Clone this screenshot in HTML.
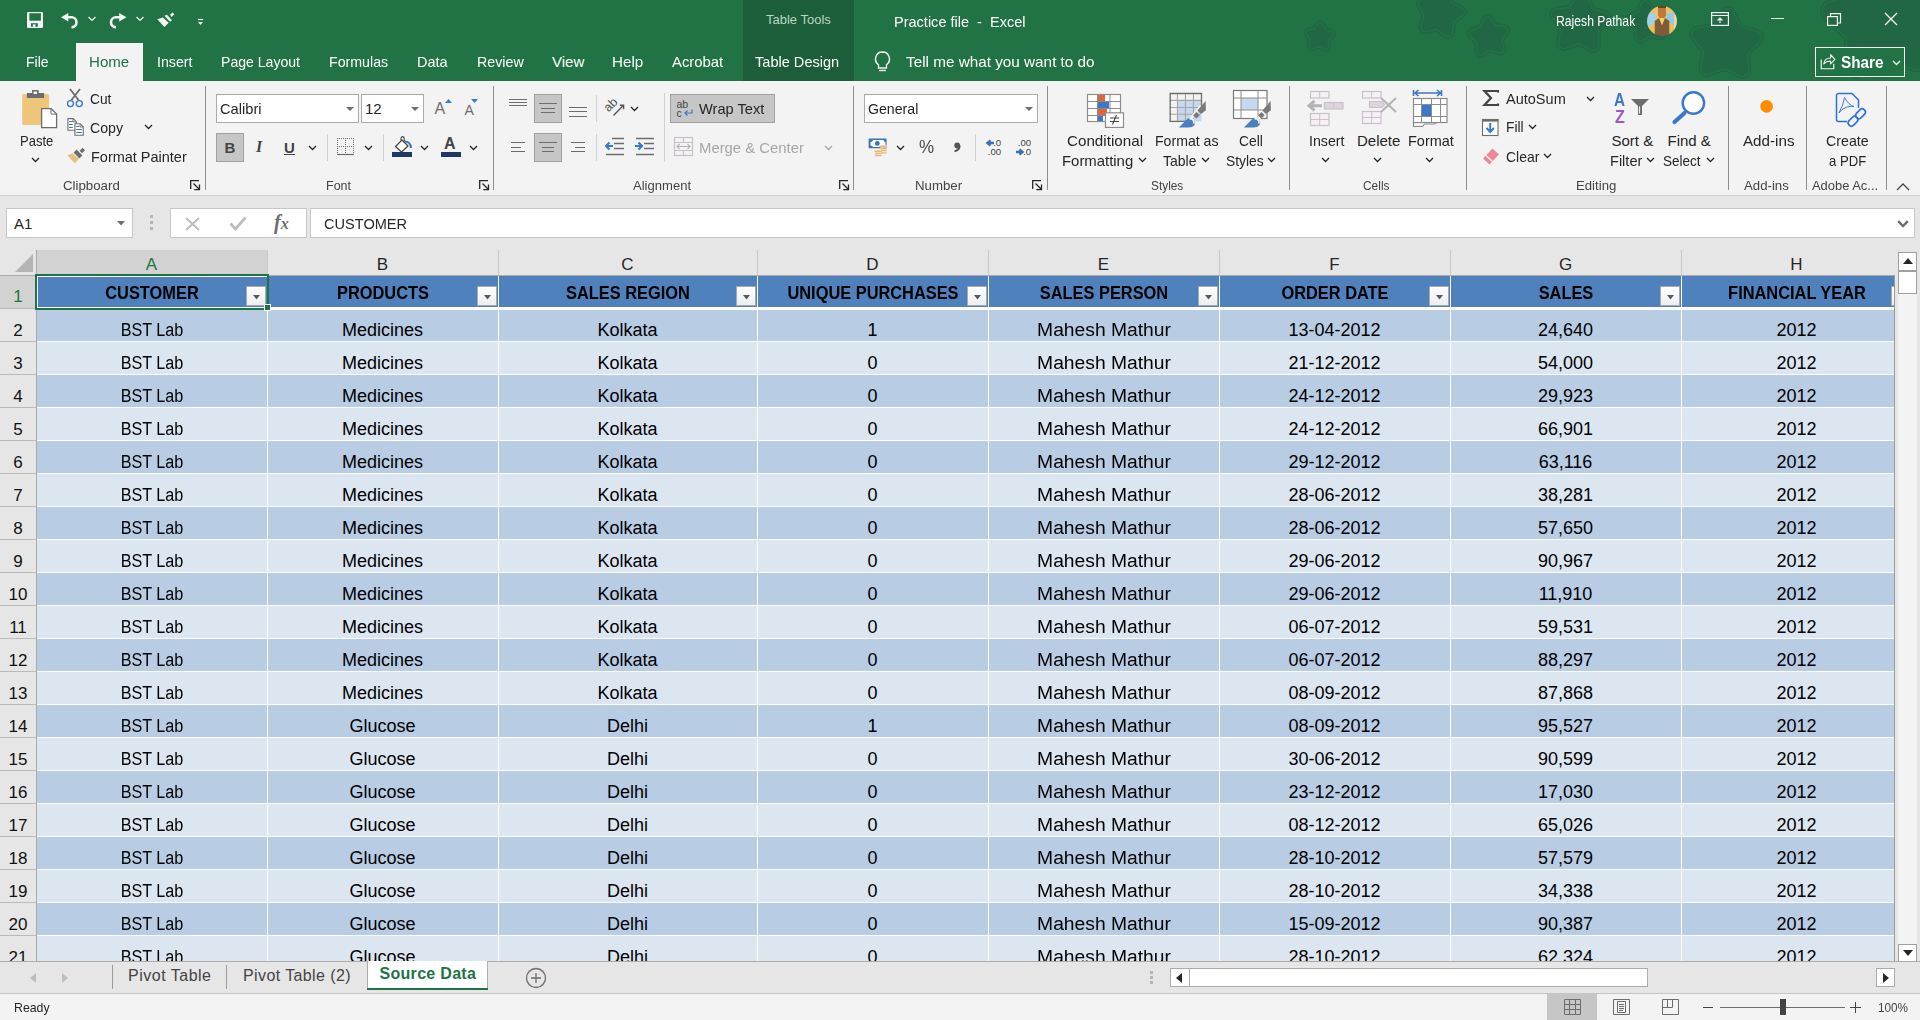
<!DOCTYPE html><html><head><meta charset="utf-8"><style>
html,body{margin:0;padding:0;width:1920px;height:1020px;overflow:hidden;background:#fff;font-family:"Liberation Sans", sans-serif;}
*{box-sizing:border-box;}
</style></head><body>
<div style="position:absolute;left:0px;top:0px;width:1920px;height:81px;background:#217346;"></div>
<svg style="position:absolute;left:0;top:0" width="1920" height="81"><path d="M1320.3,25.7 L1323.6,32.2 L1330.4,34.3 L1325.4,39.4 L1325.5,46.6 L1319.1,43.3 L1312.2,45.6 L1313.4,38.5 L1309.0,32.8 L1316.2,31.6Z" fill="#226743" stroke="#226743" stroke-width="10.5" stroke-linejoin="round"/><path d="M1320.3,25.7 L1323.6,32.2 L1330.4,34.3 L1325.4,39.4 L1325.5,46.6 L1319.1,43.3 L1312.2,45.6 L1313.4,38.5 L1309.0,32.8 L1316.2,31.6Z" fill="#217346" stroke="#217346" stroke-width="7.5" stroke-linejoin="round"/><path d="M1320.3,25.7 L1323.6,32.2 L1330.4,34.3 L1325.4,39.4 L1325.5,46.6 L1319.1,43.3 L1312.2,45.6 L1313.4,38.5 L1309.0,32.8 L1316.2,31.6Z" fill="#226743" stroke="#226743" stroke-width="4.5" stroke-linejoin="round"/><path d="M1444.2,-5.6 L1448.3,6.5 L1459.9,11.9 L1449.7,19.6 L1448.1,32.3 L1437.7,25.0 L1425.1,27.4 L1428.8,15.2 L1422.7,4.0 L1435.4,3.8Z" fill="#226743" stroke="#226743" stroke-width="13.3" stroke-linejoin="round"/><path d="M1444.2,-5.6 L1448.3,6.5 L1459.9,11.9 L1449.7,19.6 L1448.1,32.3 L1437.7,25.0 L1425.1,27.4 L1428.8,15.2 L1422.7,4.0 L1435.4,3.8Z" fill="#217346" stroke="#217346" stroke-width="10.3" stroke-linejoin="round"/><path d="M1444.2,-5.6 L1448.3,6.5 L1459.9,11.9 L1449.7,19.6 L1448.1,32.3 L1437.7,25.0 L1425.1,27.4 L1428.8,15.2 L1422.7,4.0 L1435.4,3.8Z" fill="#226743" stroke="#226743" stroke-width="7.3" stroke-linejoin="round"/><path d="M1487.3,20.6 L1493.6,29.0 L1504.1,30.3 L1498.1,38.9 L1500.1,49.3 L1490.0,46.2 L1480.7,51.3 L1480.5,40.8 L1472.8,33.6 L1482.8,30.1Z" fill="#226743" stroke="#226743" stroke-width="12.2" stroke-linejoin="round"/><path d="M1487.3,20.6 L1493.6,29.0 L1504.1,30.3 L1498.1,38.9 L1500.1,49.3 L1490.0,46.2 L1480.7,51.3 L1480.5,40.8 L1472.8,33.6 L1482.8,30.1Z" fill="#217346" stroke="#217346" stroke-width="9.2" stroke-linejoin="round"/><path d="M1487.3,20.6 L1493.6,29.0 L1504.1,30.3 L1498.1,38.9 L1500.1,49.3 L1490.0,46.2 L1480.7,51.3 L1480.5,40.8 L1472.8,33.6 L1482.8,30.1Z" fill="#226743" stroke="#226743" stroke-width="6.2" stroke-linejoin="round"/><path d="M1581.8,-1.2 L1589.1,13.2 L1604.5,17.9 L1593.1,29.3 L1593.4,45.4 L1579.0,38.1 L1563.8,43.4 L1566.3,27.4 L1556.6,14.5 L1572.5,12.0Z" fill="#226743" stroke="#226743" stroke-width="15.0" stroke-linejoin="round"/><path d="M1581.8,-1.2 L1589.1,13.2 L1604.5,17.9 L1593.1,29.3 L1593.4,45.4 L1579.0,38.1 L1563.8,43.4 L1566.3,27.4 L1556.6,14.5 L1572.5,12.0Z" fill="#217346" stroke="#217346" stroke-width="12.0" stroke-linejoin="round"/><path d="M1581.8,-1.2 L1589.1,13.2 L1604.5,17.9 L1593.1,29.3 L1593.4,45.4 L1579.0,38.1 L1563.8,43.4 L1566.3,27.4 L1556.6,14.5 L1572.5,12.0Z" fill="#226743" stroke="#226743" stroke-width="9.0" stroke-linejoin="round"/><path d="M1645.0,4.9 L1652.3,13.2 L1663.4,13.8 L1657.7,23.4 L1660.5,34.1 L1649.7,31.6 L1640.4,37.6 L1639.4,26.6 L1630.8,19.6 L1641.0,15.2Z" fill="#226743" stroke="#226743" stroke-width="12.4" stroke-linejoin="round"/><path d="M1645.0,4.9 L1652.3,13.2 L1663.4,13.8 L1657.7,23.4 L1660.5,34.1 L1649.7,31.6 L1640.4,37.6 L1639.4,26.6 L1630.8,19.6 L1641.0,15.2Z" fill="#217346" stroke="#217346" stroke-width="9.4" stroke-linejoin="round"/><path d="M1645.0,4.9 L1652.3,13.2 L1663.4,13.8 L1657.7,23.4 L1660.5,34.1 L1649.7,31.6 L1640.4,37.6 L1639.4,26.6 L1630.8,19.6 L1641.0,15.2Z" fill="#226743" stroke="#226743" stroke-width="6.4" stroke-linejoin="round"/><path d="M1727.6,14.5 L1736.8,31.7 L1755.5,37.1 L1742.0,51.1 L1742.6,70.6 L1725.1,62.1 L1706.8,68.7 L1709.5,49.4 L1697.5,34.1 L1716.7,30.7Z" fill="#226743" stroke="#226743" stroke-width="16.6" stroke-linejoin="round"/><path d="M1727.6,14.5 L1736.8,31.7 L1755.5,37.1 L1742.0,51.1 L1742.6,70.6 L1725.1,62.1 L1706.8,68.7 L1709.5,49.4 L1697.5,34.1 L1716.7,30.7Z" fill="#217346" stroke="#217346" stroke-width="13.6" stroke-linejoin="round"/><path d="M1727.6,14.5 L1736.8,31.7 L1755.5,37.1 L1742.0,51.1 L1742.6,70.6 L1725.1,62.1 L1706.8,68.7 L1709.5,49.4 L1697.5,34.1 L1716.7,30.7Z" fill="#226743" stroke="#226743" stroke-width="10.6" stroke-linejoin="round"/><path d="M1876.6,-29.2 L1896.4,-3.0 L1929.0,1.1 L1910.2,28.0 L1916.5,60.3 L1885.0,50.7 L1856.3,66.6 L1855.7,33.7 L1831.6,11.3 L1862.7,0.6Z" fill="#226743" stroke="#226743" stroke-width="23.4" stroke-linejoin="round"/><path d="M1876.6,-29.2 L1896.4,-3.0 L1929.0,1.1 L1910.2,28.0 L1916.5,60.3 L1885.0,50.7 L1856.3,66.6 L1855.7,33.7 L1831.6,11.3 L1862.7,0.6Z" fill="#217346" stroke="#217346" stroke-width="20.4" stroke-linejoin="round"/><path d="M1876.6,-29.2 L1896.4,-3.0 L1929.0,1.1 L1910.2,28.0 L1916.5,60.3 L1885.0,50.7 L1856.3,66.6 L1855.7,33.7 L1831.6,11.3 L1862.7,0.6Z" fill="#226743" stroke="#226743" stroke-width="17.4" stroke-linejoin="round"/></svg>
<div style="position:absolute;left:743px;top:0px;width:111px;height:81px;background:#1c5e3a;"></div>
<div style="position:absolute;left:766.0px;top:13.00px;font-size:13px;line-height:13px;color:#b9d6c4;font-weight:normal;white-space:nowrap;transform:scaleX(1.000);transform-origin:0 0;">Table Tools</div>
<svg style="position:absolute;left:0;top:0" width="220" height="40"><rect x="27" y="12" width="16" height="16" rx="1.2" fill="#f3f3f3"/><rect x="29.4" y="13.2" width="11.5" height="7.5" fill="#217346"/><rect x="31" y="23.2" width="6.8" height="3.6" fill="#217346"/><rect x="32.9" y="24.3" width="2.6" height="2.6" fill="#f3f3f3"/><g id="undo"><path d="M61 17.3L68.3 13.1V21.6Z" fill="#f3f3f3"/><path d="M67 17.25H72A5 5 0 0 1 72 27.2H71.5" fill="none" stroke="#f3f3f3" stroke-width="2.6"/></g><path d="M88.5 17l3.5 3.5 3.5-3.5" fill="none" stroke="#f3f3f3" stroke-width="1.2"/><g transform="translate(187.5 0) scale(-1 1)"><path d="M61 17.3L68.3 13.1V21.6Z" fill="#f3f3f3"/><path d="M67 17.25H72A5 5 0 0 1 72 27.2H71.5" fill="none" stroke="#f3f3f3" stroke-width="2.6"/></g><path d="M136.5 17l3.5 3.5 3.5-3.5" fill="none" stroke="#f3f3f3" stroke-width="1.2"/><path d="M157.3 19.25L162.8 17.4L168.75 22.7L164.4 27.1Z" fill="#f3f3f3"/><path d="M164.4 15.8L166.9 14.7L172 20.2L170 21.75Z" fill="#f3f3f3"/><path d="M170 14.7L172.5 12.4L174.4 14.25L171.6 17Z" fill="#f3f3f3"/><rect x="198" y="18.9" width="5.1" height="1.2" fill="#f3f3f3"/><path d="M198 22H203.1L200.55 25Z" fill="#f3f3f3"/></svg>
<div style="position:absolute;left:894.0px;top:14.30px;font-size:15px;line-height:15px;color:#ffffff;font-weight:normal;white-space:nowrap;transform:scaleX(0.968);transform-origin:0 0;">Practice file&nbsp; - &nbsp;Excel</div>
<div style="position:absolute;left:1556.0px;top:14.15px;font-size:14px;line-height:14px;color:#ffffff;font-weight:normal;white-space:nowrap;transform:scaleX(0.870);transform-origin:0 0;">Rajesh Pathak</div>
<svg style="position:absolute;left:1647px;top:6px;" width="31" height="31" viewBox="0 0 31 31"><defs><clipPath id="av"><circle cx="15" cy="15" r="15"/></clipPath><filter id="avb"><feGaussianBlur stdDeviation="0.5"/></filter></defs><g clip-path="url(#av)"><g filter="url(#avb)"><rect x="-2" y="-2" width="35" height="35" fill="#f0c068"/><rect x="-2" y="7" width="11" height="13" fill="#9fd2ea"/><rect x="19" y="7" width="14" height="12" fill="#9cc8dc"/><rect x="27" y="9" width="6" height="18" fill="#e8d4b0"/><path d="M11 0h8v9l-1.5 3h-5L11 9z" fill="#c07838"/><path d="M11 -1h8v3h-8z" fill="#6a4020"/><path d="M12 12h6l-1 7h-4z" fill="#f2d060"/><path d="M7.5 32V15l4.5-3 3 7.5 3-7.5 4.5 3v17z" fill="#7e5c3a"/><path d="M3 32l1.5-12 3-5v17zM27 32l-1.5-12-3-5v17z" fill="#f0c050"/></g></g></svg>
<svg style="position:absolute;left:1711px;top:12px;" width="18" height="14" viewBox="0 0 18 14"><rect x="0.6" y="0.6" width="16.8" height="12.8" fill="none" stroke="#f3f3f3" stroke-width="1.2"/><path d="M1 3.5h16" stroke="#f3f3f3" stroke-width="1"/><path d="M9 11V6M6.5 8.5L9 6l2.5 2.5" fill="none" stroke="#f3f3f3" stroke-width="1.2"/></svg>
<div style="position:absolute;left:1771px;top:18px;width:13px;height:1px;background:#f3f3f3;"></div>
<svg style="position:absolute;left:1827px;top:13px;" width="15" height="13" viewBox="0 0 15 13"><rect x="0.6" y="3.6" width="9.8" height="8.8" fill="none" stroke="#f3f3f3" stroke-width="1.2"/><path d="M3.5 3.5V0.6h10v9.4h-3" fill="none" stroke="#f3f3f3" stroke-width="1.2"/></svg>
<svg style="position:absolute;left:1884px;top:12px;" width="14" height="14" viewBox="0 0 14 14"><path d="M1 1l12 12M13 1L1 13" stroke="#f3f3f3" stroke-width="1.4"/></svg>
<div style="position:absolute;left:76px;top:43px;width:67px;height:38px;background:#f3f3f3;"></div>
<div style="position:absolute;left:25.6px;top:54.30px;font-size:15px;line-height:15px;color:#ffffff;font-weight:normal;white-space:nowrap;transform:scaleX(0.933);transform-origin:0 0;">File</div>
<div style="position:absolute;left:88.5px;top:54.30px;font-size:15px;line-height:15px;color:#217346;font-weight:normal;white-space:nowrap;transform:scaleX(1.006);transform-origin:0 0;">Home</div>
<div style="position:absolute;left:157.0px;top:54.30px;font-size:15px;line-height:15px;color:#ffffff;font-weight:normal;white-space:nowrap;transform:scaleX(0.947);transform-origin:0 0;">Insert</div>
<div style="position:absolute;left:221.0px;top:54.30px;font-size:15px;line-height:15px;color:#ffffff;font-weight:normal;white-space:nowrap;transform:scaleX(0.938);transform-origin:0 0;">Page Layout</div>
<div style="position:absolute;left:329.0px;top:54.30px;font-size:15px;line-height:15px;color:#ffffff;font-weight:normal;white-space:nowrap;transform:scaleX(0.946);transform-origin:0 0;">Formulas</div>
<div style="position:absolute;left:417.0px;top:54.30px;font-size:15px;line-height:15px;color:#ffffff;font-weight:normal;white-space:nowrap;transform:scaleX(0.966);transform-origin:0 0;">Data</div>
<div style="position:absolute;left:477.0px;top:54.30px;font-size:15px;line-height:15px;color:#ffffff;font-weight:normal;white-space:nowrap;transform:scaleX(0.951);transform-origin:0 0;">Review</div>
<div style="position:absolute;left:552.0px;top:54.30px;font-size:15px;line-height:15px;color:#ffffff;font-weight:normal;white-space:nowrap;transform:scaleX(1.000);transform-origin:0 0;">View</div>
<div style="position:absolute;left:612.0px;top:54.30px;font-size:15px;line-height:15px;color:#ffffff;font-weight:normal;white-space:nowrap;transform:scaleX(1.013);transform-origin:0 0;">Help</div>
<div style="position:absolute;left:672.0px;top:54.30px;font-size:15px;line-height:15px;color:#ffffff;font-weight:normal;white-space:nowrap;transform:scaleX(0.991);transform-origin:0 0;">Acrobat</div>
<div style="position:absolute;left:755.0px;top:54.30px;font-size:15px;line-height:15px;color:#ffffff;font-weight:normal;white-space:nowrap;transform:scaleX(0.971);transform-origin:0 0;">Table Design</div>
<svg style="position:absolute;left:874px;top:51px;" width="17" height="22" viewBox="0 0 17 22"><path d="M8.5 1a7 7 0 0 0-4 12.7V17h8v-3.3A7 7 0 0 0 8.5 1z" fill="none" stroke="#f3f3f3" stroke-width="1.4"/><path d="M5 19.5h7" stroke="#f3f3f3" stroke-width="1.4"/></svg>
<div style="position:absolute;left:906.0px;top:54.30px;font-size:15px;line-height:15px;color:#ffffff;font-weight:normal;white-space:nowrap;transform:scaleX(1.019);transform-origin:0 0;">Tell me what you want to do</div>
<div style="position:absolute;left:1815px;top:47px;width:90px;height:30px;border:1.3px solid #f3f3f3;background:#217346;"></div>
<svg style="position:absolute;left:1818px;top:50px;" width="20" height="22" viewBox="0 0 20 22"><path d="M3.25 9.5V18.75H15.75V13.8" fill="none" stroke="#f3f3f3" stroke-width="1.2"/><path d="M5.75 13.9Q6.8 8 12.6 8V4.6L16.9 9.3L12.6 13.8V11Q8.5 11 5.75 13.9Z" fill="none" stroke="#f3f3f3" stroke-width="1.1" stroke-linejoin="round"/></svg>
<div style="position:absolute;left:1841.0px;top:55.46px;font-size:16px;line-height:16px;color:#ffffff;font-weight:bold;white-space:nowrap;transform:scaleX(0.956);transform-origin:0 0;">Share</div>
<svg style="position:absolute;left:1892px;top:60px;" width="9" height="6" viewBox="0 0 9 6"><path d="M1 1l3.5 3.5L8 1" fill="none" stroke="#f3f3f3" stroke-width="1.3"/></svg>
<div style="position:absolute;left:0px;top:81px;width:1920px;height:115px;background:#f3f3f3;border-bottom:1px solid #cfcfcf;"></div>
<div style="position:absolute;left:205px;top:86px;width:1px;height:104px;background:#8e8e8e;"></div>
<div style="position:absolute;left:493px;top:86px;width:1px;height:104px;background:#8e8e8e;"></div>
<div style="position:absolute;left:853px;top:86px;width:1px;height:104px;background:#8e8e8e;"></div>
<div style="position:absolute;left:1047px;top:86px;width:1px;height:104px;background:#8e8e8e;"></div>
<div style="position:absolute;left:1289px;top:86px;width:1px;height:104px;background:#8e8e8e;"></div>
<div style="position:absolute;left:1466px;top:86px;width:1px;height:104px;background:#8e8e8e;"></div>
<div style="position:absolute;left:1728px;top:86px;width:1px;height:104px;background:#8e8e8e;"></div>
<div style="position:absolute;left:1806px;top:86px;width:1px;height:104px;background:#8e8e8e;"></div>
<div style="position:absolute;left:1886px;top:86px;width:1px;height:104px;background:#8e8e8e;"></div>
<div style="position:absolute;left:62.5px;top:178.57px;font-size:13.5px;line-height:13.5px;color:#444444;font-weight:normal;white-space:nowrap;transform:scaleX(0.983);transform-origin:0 0;">Clipboard</div>
<div style="position:absolute;left:326.0px;top:178.57px;font-size:13.5px;line-height:13.5px;color:#444444;font-weight:normal;white-space:nowrap;transform:scaleX(0.926);transform-origin:0 0;">Font</div>
<div style="position:absolute;left:633.0px;top:178.57px;font-size:13.5px;line-height:13.5px;color:#444444;font-weight:normal;white-space:nowrap;transform:scaleX(0.967);transform-origin:0 0;">Alignment</div>
<div style="position:absolute;left:915.0px;top:178.57px;font-size:13.5px;line-height:13.5px;color:#444444;font-weight:normal;white-space:nowrap;transform:scaleX(0.980);transform-origin:0 0;">Number</div>
<div style="position:absolute;left:1151.0px;top:178.57px;font-size:13.5px;line-height:13.5px;color:#444444;font-weight:normal;white-space:nowrap;transform:scaleX(0.878);transform-origin:0 0;">Styles</div>
<div style="position:absolute;left:1363.0px;top:178.57px;font-size:13.5px;line-height:13.5px;color:#444444;font-weight:normal;white-space:nowrap;transform:scaleX(0.883);transform-origin:0 0;">Cells</div>
<div style="position:absolute;left:1576.0px;top:178.57px;font-size:13.5px;line-height:13.5px;color:#444444;font-weight:normal;white-space:nowrap;transform:scaleX(0.976);transform-origin:0 0;">Editing</div>
<div style="position:absolute;left:1744.0px;top:178.57px;font-size:13.5px;line-height:13.5px;color:#444444;font-weight:normal;white-space:nowrap;transform:scaleX(0.978);transform-origin:0 0;">Add-ins</div>
<div style="position:absolute;left:1812.0px;top:178.57px;font-size:13.5px;line-height:13.5px;color:#444444;font-weight:normal;white-space:nowrap;transform:scaleX(0.957);transform-origin:0 0;">Adobe Ac...</div>
<svg style="position:absolute;left:20px;top:88px;" width="40" height="42" viewBox="0 0 40 42"><rect x="2.2" y="6" width="26.8" height="31" rx="1.5" fill="#edc67a"/><path d="M6.9 5h17.2v5H6.9z" fill="#6d6d6d"/><rect x="12" y="2" width="6.7" height="4" fill="#6d6d6d"/><rect x="13.5" y="3.5" width="3.5" height="2.5" fill="#f3f3f3"/><path d="M21.6 20.6h9.5l5.5 5.5v13.6h-15z" fill="#ffffff" stroke="#6d6d6d" stroke-width="1.3"/><path d="M31 20.6v5.5h5.5" fill="none" stroke="#6d6d6d" stroke-width="1"/></svg>
<div style="position:absolute;left:19.5px;top:133.30px;font-size:15px;line-height:15px;color:#262626;font-weight:normal;white-space:nowrap;transform:scaleX(0.868);transform-origin:0 0;">Paste</div>
<svg style="position:absolute;left:31px;top:157px;" width="9" height="6" viewBox="0 0 9 6"><path d="M1 1l3.5 3.5L8 1" fill="none" stroke="#262626" stroke-width="1.3"/></svg>
<svg style="position:absolute;left:66px;top:88px;" width="18" height="20" viewBox="0 0 18 20"><path d="M4 1l10 13M14 1L4 14" stroke="#6d6d6d" stroke-width="1.8"/><circle cx="4.5" cy="15.6" r="3" fill="#f3f3f3" stroke="#3c78c8" stroke-width="1.4"/><circle cx="13.3" cy="15.6" r="3" fill="#f3f3f3" stroke="#3c78c8" stroke-width="1.4"/></svg>
<div style="position:absolute;left:90.0px;top:91.30px;font-size:15px;line-height:15px;color:#262626;font-weight:normal;white-space:nowrap;transform:scaleX(0.917);transform-origin:0 0;">Cut</div>
<svg style="position:absolute;left:60px;top:110px" width="30" height="30"><g transform="translate(-60 -110)"><path d="M67.9 118.6H73.2L76.3 121.7V130.2H67.9Z" fill="#fff" stroke="#6d6d6d" stroke-width="1.1"/><path d="M73 118.8V121.9H76.2" fill="none" stroke="#6d6d6d" stroke-width="0.9"/><path d="M69.1 121.5h3.7M69.1 124.5h3.7M69.1 127.5h3.7" stroke="#3a74b8" stroke-width="1.1"/><path d="M74.9 123.8H80.2L83.2 126.8V135.2H74.9Z" fill="#fff" stroke="#6d6d6d" stroke-width="1.1"/><path d="M80 124V127H83" fill="none" stroke="#6d6d6d" stroke-width="0.9"/><path d="M76.2 126.5h3M76.2 129.5h5.6M76.2 132.5h5.6" stroke="#3a74b8" stroke-width="1.1"/></g></svg>
<div style="position:absolute;left:90.0px;top:120.30px;font-size:15px;line-height:15px;color:#262626;font-weight:normal;white-space:nowrap;transform:scaleX(0.944);transform-origin:0 0;">Copy</div>
<svg style="position:absolute;left:144px;top:124px;" width="9" height="6" viewBox="0 0 9 6"><path d="M1 1l3.5 3.5L8 1" fill="none" stroke="#262626" stroke-width="1.3"/></svg>
<svg style="position:absolute;left:60px;top:140px" width="30" height="30"><g transform="translate(-60 -140)"><path d="M67.3 155.3L72.6 153.2L78.9 159L74.7 163.2Z" fill="#e8be78"/><path d="M73.6 152.6L76.6 149.6L82.4 155.4L79.4 158.4Z" fill="#6d6d6d"/><path d="M79.6 150.8L82.6 147.8L85 150.2L82 153.2Z" fill="#6d6d6d"/></g></svg>
<div style="position:absolute;left:90.5px;top:149.30px;font-size:15px;line-height:15px;color:#262626;font-weight:normal;white-space:nowrap;transform:scaleX(0.965);transform-origin:0 0;">Format Painter</div>
<svg style="position:absolute;left:190px;top:180px;" width="11" height="11" viewBox="0 0 11 11"><path d="M0.7 9V0.7H9" fill="none" stroke="#262626" stroke-width="1.3"/><path d="M3.5 3.5L9.5 9.5M9.5 4.5v5.2H4.3" fill="none" stroke="#262626" stroke-width="1.3"/></svg>
<svg style="position:absolute;left:479px;top:180px;" width="11" height="11" viewBox="0 0 11 11"><path d="M0.7 9V0.7H9" fill="none" stroke="#262626" stroke-width="1.3"/><path d="M3.5 3.5L9.5 9.5M9.5 4.5v5.2H4.3" fill="none" stroke="#262626" stroke-width="1.3"/></svg>
<svg style="position:absolute;left:839px;top:180px;" width="11" height="11" viewBox="0 0 11 11"><path d="M0.7 9V0.7H9" fill="none" stroke="#262626" stroke-width="1.3"/><path d="M3.5 3.5L9.5 9.5M9.5 4.5v5.2H4.3" fill="none" stroke="#262626" stroke-width="1.3"/></svg>
<svg style="position:absolute;left:1032px;top:180px;" width="11" height="11" viewBox="0 0 11 11"><path d="M0.7 9V0.7H9" fill="none" stroke="#262626" stroke-width="1.3"/><path d="M3.5 3.5L9.5 9.5M9.5 4.5v5.2H4.3" fill="none" stroke="#262626" stroke-width="1.3"/></svg>
<div style="position:absolute;left:216px;top:94px;width:143px;height:29px;background:#fff;border:1px solid #ababab;"></div>
<div style="position:absolute;left:219.5px;top:101.30px;font-size:15px;line-height:15px;color:#262626;font-weight:normal;white-space:nowrap;transform:scaleX(0.977);transform-origin:0 0;">Calibri</div>
<svg style="position:absolute;left:346px;top:107px;" width="8" height="4" viewBox="0 0 8 4"><path d="M0 0h8L4 4z" fill="#6d6d6d"/></svg>
<div style="position:absolute;left:361px;top:94px;width:63px;height:29px;background:#fff;border:1px solid #ababab;"></div>
<div style="position:absolute;left:365px;top:101.30px;font-size:15px;line-height:15px;color:#262626;font-weight:normal;white-space:nowrap;">12</div>
<svg style="position:absolute;left:411px;top:107px;" width="8" height="4" viewBox="0 0 8 4"><path d="M0 0h8L4 4z" fill="#6d6d6d"/></svg>
<div style="position:absolute;left:434.5px;top:100.96px;font-size:16px;line-height:16px;color:#6d6d6d;font-weight:normal;white-space:nowrap;">A</div>
<svg style="position:absolute;left:445px;top:99px;" width="8" height="4" viewBox="0 0 8 4"><path d="M0 4h7L3.5 0z" fill="#3c78c8"/></svg>
<div style="position:absolute;left:464.5px;top:102.65px;font-size:14px;line-height:14px;color:#6d6d6d;font-weight:normal;white-space:nowrap;">A</div>
<svg style="position:absolute;left:471px;top:99px;" width="8" height="4" viewBox="0 0 8 4"><path d="M0 0h7L3.5 4z" fill="#3c78c8"/></svg>
<div style="position:absolute;left:216px;top:133px;width:28px;height:29px;background:#c6c6c6;border:1px solid #a0a0a0;"></div>
<div style="position:absolute;left:224.5px;top:139.80px;font-size:15px;line-height:15px;color:#444444;font-weight:bold;white-space:nowrap;">B</div>
<div style="position:absolute;left:256px;top:138.96px;font-size:16px;line-height:16px;color:#444444;font-weight:bold;white-space:nowrap;font-family:Liberation Serif, serif;"><i>I</i></div>
<div style="position:absolute;left:284px;top:139.80px;font-size:15px;line-height:15px;color:#444444;font-weight:bold;white-space:nowrap;">U</div>
<div style="position:absolute;left:284px;top:154px;width:11px;height:1px;background:#444;"></div>
<svg style="position:absolute;left:308px;top:145px;" width="9" height="6" viewBox="0 0 9 6"><path d="M1 1l3.5 3.5L8 1" fill="none" stroke="#262626" stroke-width="1.3"/></svg>
<div style="position:absolute;left:327px;top:134px;width:1px;height:27px;background:#d0d0d0;"></div>
<svg style="position:absolute;left:336px;top:137px;" width="19" height="19" viewBox="0 0 19 19"><path d="M1.5 1v16M9.5 1v16M17.5 1v16M1 1.5h17M1 9.5h17" fill="none" stroke="#6d6d6d" stroke-width="1" stroke-dasharray="1 1" shape-rendering="crispEdges"/><path d="M1 17.5h17" stroke="#6d6d6d" stroke-width="1.2"/></svg>
<svg style="position:absolute;left:364px;top:145px;" width="9" height="6" viewBox="0 0 9 6"><path d="M1 1l3.5 3.5L8 1" fill="none" stroke="#262626" stroke-width="1.3"/></svg>
<div style="position:absolute;left:383px;top:134px;width:1px;height:27px;background:#d0d0d0;"></div>
<svg style="position:absolute;left:392px;top:136px;" width="21" height="22" viewBox="0 0 21 22"><path d="M3.5 10.5l6.5-6.5 6 6-6.5 6z" fill="#fff" stroke="#444" stroke-width="1.2" stroke-linejoin="round"/><path d="M9 4.5V2.2a1.6 1.6 0 0 1 3.2 0V6.5" fill="none" stroke="#444" stroke-width="1.1"/><path d="M12.5 5.5q6 0 6.5 6.5" fill="none" stroke="#3c78c8" stroke-width="2.2"/><rect x="0" y="16" width="20" height="5" fill="#1f3864"/></svg>
<svg style="position:absolute;left:420px;top:145px;" width="9" height="6" viewBox="0 0 9 6"><path d="M1 1l3.5 3.5L8 1" fill="none" stroke="#262626" stroke-width="1.3"/></svg>
<div style="position:absolute;left:444px;top:135.96px;font-size:16px;line-height:16px;color:#444444;font-weight:bold;white-space:nowrap;">A</div>
<div style="position:absolute;left:441px;top:152px;width:20px;height:5px;background:#1f3864;"></div>
<svg style="position:absolute;left:469px;top:145px;" width="9" height="6" viewBox="0 0 9 6"><path d="M1 1l3.5 3.5L8 1" fill="none" stroke="#262626" stroke-width="1.3"/></svg>
<div style="position:absolute;left:534px;top:94px;width:28px;height:29px;background:#c6c6c6;border:1px solid #a0a0a0;"></div>
<div style="position:absolute;left:534px;top:133px;width:28px;height:29px;background:#c6c6c6;border:1px solid #a0a0a0;"></div>
<div style="position:absolute;left:509px;top:99px;width:18px;height:1.3px;background:#6d6d6d;"></div>
<div style="position:absolute;left:509px;top:102px;width:18px;height:1.3px;background:#6d6d6d;"></div>
<div style="position:absolute;left:509px;top:105px;width:18px;height:1.3px;background:#6d6d6d;"></div>
<div style="position:absolute;left:539px;top:103px;width:18px;height:1.3px;background:#6d6d6d;"></div>
<div style="position:absolute;left:541px;top:107.5px;width:14px;height:1.3px;background:#6d6d6d;"></div>
<div style="position:absolute;left:541px;top:111.5px;width:14px;height:1.3px;background:#6d6d6d;"></div>
<div style="position:absolute;left:569px;top:106.5px;width:18px;height:1.3px;background:#6d6d6d;"></div>
<div style="position:absolute;left:569px;top:111px;width:18px;height:1.3px;background:#6d6d6d;"></div>
<div style="position:absolute;left:569px;top:116px;width:18px;height:1.3px;background:#6d6d6d;"></div>
<div style="position:absolute;left:511px;top:142px;width:14px;height:1.3px;background:#6d6d6d;"></div>
<div style="position:absolute;left:511px;top:146.5px;width:10px;height:1.3px;background:#6d6d6d;"></div>
<div style="position:absolute;left:511px;top:151px;width:14px;height:1.3px;background:#6d6d6d;"></div>
<div style="position:absolute;left:539px;top:142px;width:18px;height:1.3px;background:#6d6d6d;"></div>
<div style="position:absolute;left:542px;top:146.5px;width:12px;height:1.3px;background:#6d6d6d;"></div>
<div style="position:absolute;left:542px;top:151px;width:12px;height:1.3px;background:#6d6d6d;"></div>
<div style="position:absolute;left:571px;top:142px;width:14px;height:1.3px;background:#6d6d6d;"></div>
<div style="position:absolute;left:575px;top:146.5px;width:10px;height:1.3px;background:#6d6d6d;"></div>
<div style="position:absolute;left:571px;top:151px;width:14px;height:1.3px;background:#6d6d6d;"></div>
<div style="position:absolute;left:596px;top:95px;width:1px;height:27px;background:#d0d0d0;"></div>
<div style="position:absolute;left:596px;top:134px;width:1px;height:27px;background:#d0d0d0;"></div>
<div style="position:absolute;left:664px;top:93px;width:1px;height:69px;background:#d0d0d0;"></div>
<svg style="position:absolute;left:600px;top:94px;" width="30" height="28" viewBox="0 0 30 28"><text x="0" y="0" font-size="12.5" fill="#555" font-family="Liberation Sans" transform="translate(8.6 18.6) rotate(-45)">ab</text><path d="M13.5 21.4L23.2 11.5M19.8 11.2H23.6V15.2" fill="none" stroke="#555" stroke-width="1.4"/></svg>
<svg style="position:absolute;left:630px;top:106px;" width="9" height="6" viewBox="0 0 9 6"><path d="M1 1l3.5 3.5L8 1" fill="none" stroke="#262626" stroke-width="1.3"/></svg>
<svg style="position:absolute;left:605px;top:137px;" width="20" height="19" viewBox="0 0 20 19"><path d="M7 1.5h12M9 6.5h10M9 11.5h10M1 17.5h18" stroke="#6d6d6d" stroke-width="1.3"/><path d="M1 9h7M4.5 5.5L1 9l3.5 3.5" fill="none" stroke="#3c78c8" stroke-width="2.2"/></svg>
<svg style="position:absolute;left:635px;top:137px;" width="20" height="19" viewBox="0 0 20 19"><path d="M1 1.5h18M9 6.5h10M9 11.5h10M1 17.5h18" stroke="#6d6d6d" stroke-width="1.3"/><path d="M0 9h7M3.5 5.5L7 9l-3.5 3.5" fill="none" stroke="#3c78c8" stroke-width="2.2"/></svg>
<div style="position:absolute;left:670px;top:94px;width:105px;height:29px;background:#c6c6c6;border:1px solid #a0a0a0;"></div>
<div style="position:absolute;left:676.5px;top:98.61px;font-size:10.5px;line-height:10.5px;color:#444444;font-weight:normal;white-space:nowrap;">ab</div>
<div style="position:absolute;left:676.5px;top:107.61px;font-size:10.5px;line-height:10.5px;color:#444444;font-weight:normal;white-space:nowrap;">c</div>
<svg style="position:absolute;left:683px;top:109px;" width="10" height="8" viewBox="0 0 10 8"><path d="M9 0.5v3.5H2M4.5 1.5L2 4l2.5 2.5" fill="none" stroke="#3c78c8" stroke-width="1.2"/></svg>
<div style="position:absolute;left:698.5px;top:100.80px;font-size:15px;line-height:15px;color:#262626;font-weight:normal;white-space:nowrap;transform:scaleX(0.976);transform-origin:0 0;">Wrap Text</div>
<svg style="position:absolute;left:673px;top:136px;" width="21" height="21" viewBox="0 0 21 21"><rect x="1.5" y="1.5" width="18" height="18" fill="none" stroke="#c9bfc9" stroke-width="1.2"/><path d="M1.5 6.5h18M1.5 14.5h18M10.5 1.5v5M10.5 14.5v5" stroke="#c9bfc9" stroke-width="1.2"/><path d="M4 10.5h13M6.5 8l-2.5 2.5 2.5 2.5M14.5 8l2.5 2.5-2.5 2.5" fill="none" stroke="#b4b4b4" stroke-width="1.1"/></svg>
<div style="position:absolute;left:698.5px;top:139.80px;font-size:15px;line-height:15px;color:#a6a6a6;font-weight:normal;white-space:nowrap;transform:scaleX(0.991);transform-origin:0 0;">Merge &amp; Center</div>
<svg style="position:absolute;left:824px;top:145px;" width="9" height="6" viewBox="0 0 9 6"><path d="M1 1l3.5 3.5L8 1" fill="none" stroke="#a6a6a6" stroke-width="1.3"/></svg>
<div style="position:absolute;left:864px;top:94px;width:174px;height:29px;background:#fff;border:1px solid #ababab;"></div>
<div style="position:absolute;left:867.5px;top:101.30px;font-size:15px;line-height:15px;color:#262626;font-weight:normal;white-space:nowrap;transform:scaleX(0.943);transform-origin:0 0;">General</div>
<svg style="position:absolute;left:1025px;top:107px;" width="8" height="4" viewBox="0 0 8 4"><path d="M0 0h8L4 4z" fill="#6d6d6d"/></svg>
<svg style="position:absolute;left:864px;top:134px;" width="28" height="26" viewBox="0 0 28 26"><rect x="4.6" y="4.5" width="18" height="9.8" rx="1" fill="#3a74b8"/><path d="M6.5 8q2.2 0 2.5-2h10.5q0.3 2 2 2.2v3.2q-1.5 0 -2 1.6H9q-0.3-1.6-2.5-1.6z" fill="#fff"/><circle cx="13.3" cy="9.4" r="2.4" fill="#3a74b8"/><g fill="none" stroke="#e8b86a" stroke-width="1.3"><path d="M15.5 12.4h7.5M16.5 14.5h6M16.5 16.5h6M16.5 18.8h6"/><path d="M10.5 17.5h7.5M11 19.5h6.5M11 21.6h6.5"/></g><ellipse cx="19.2" cy="12.3" rx="3.9" ry="1.3" fill="#e8b86a" stroke="#f3f3f3" stroke-width="0.6"/><ellipse cx="14.2" cy="17.4" rx="3.9" ry="1.3" fill="#e8b86a" stroke="#f3f3f3" stroke-width="0.6"/></svg>
<svg style="position:absolute;left:896px;top:145px;" width="9" height="6" viewBox="0 0 9 6"><path d="M1 1l3.5 3.5L8 1" fill="none" stroke="#262626" stroke-width="1.3"/></svg>
<div style="position:absolute;left:918.5px;top:138.34px;font-size:18.5px;line-height:18.5px;color:#4a4a4a;font-weight:normal;white-space:nowrap;transform:scaleX(0.92);transform-origin:0 0;">%</div>
<svg style="position:absolute;left:950px;top:140px;" width="12" height="14" viewBox="0 0 12 14"><circle cx="7.2" cy="5.5" r="2.9" fill="#555"/><path d="M9.6 5.5Q10 10 4.5 11.3" fill="none" stroke="#555" stroke-width="1.9"/></svg>
<div style="position:absolute;left:975px;top:134px;width:1px;height:27px;background:#d0d0d0;"></div>
<svg style="position:absolute;left:980px;top:134px;" width="60" height="26" viewBox="0 0 60 26"><g font-family="Liberation Sans" font-size="9.6" fill="#444"><text x="21.2" y="11.9" text-anchor="end">.0</text><text x="21.2" y="21" text-anchor="end">.00</text><text x="51.2" y="11.9" text-anchor="end">.00</text><text x="51.2" y="21" text-anchor="end">.0</text></g><path d="M14 9H8.2M10.5 6.3L7.3 9l3.2 2.7" fill="none" stroke="#3a74b8" stroke-width="2.3"/><path d="M36 18h5.8M39.5 15.3L42.7 18l-3.2 2.7" fill="none" stroke="#3a74b8" stroke-width="2.3"/></svg>
<svg style="position:absolute;left:1086px;top:93px;" width="40" height="36" viewBox="0 0 40 36"><rect x="1.5" y="1.5" width="33" height="27" fill="#fff" stroke="#8c8c8c" stroke-width="1.2"/><path d="M11.5 1.5v27M24 1.5v27M1.5 8.5h33M1.5 15.5h33M1.5 22.5h33" stroke="#8c8c8c" stroke-width="1"/><rect x="12" y="2" width="7" height="6" fill="#e0643c"/><rect x="12" y="9" width="11" height="6" fill="#3c78c8"/><rect x="12" y="16" width="9" height="6" fill="#e0643c"/><rect x="12" y="23" width="5" height="5" fill="#3c78c8"/><rect x="19.5" y="19.8" width="18" height="14.6" fill="#fff" stroke="#8c8c8c" stroke-width="1.2"/><path d="M24 25h9M24 28.5h9M30.5 22l-4 9.5" stroke="#444" stroke-width="1.1"/></svg>
<div style="position:absolute;left:1066.5px;top:133.30px;font-size:15px;line-height:15px;color:#262626;font-weight:normal;white-space:nowrap;transform:scaleX(1.013);transform-origin:0 0;">Conditional</div>
<div style="position:absolute;left:1061.5px;top:152.80px;font-size:15px;line-height:15px;color:#262626;font-weight:normal;white-space:nowrap;transform:scaleX(0.993);transform-origin:0 0;">Formatting</div>
<svg style="position:absolute;left:1138px;top:157px;" width="9" height="6" viewBox="0 0 9 6"><path d="M1 1l3.5 3.5L8 1" fill="none" stroke="#262626" stroke-width="1.3"/></svg>
<svg style="position:absolute;left:1168px;top:92px;" width="42" height="38" viewBox="0 0 42 38"><rect x="9.5" y="8.4" width="24" height="21" fill="#c5d8ee"/><path d="M9.45 1.5v28M17.45 1.5v28M25.45 1.5v25M1.5 8.4h32M1.5 15.45h32M1.5 22.3h30" stroke="#a6a6a6" stroke-width="1.1"/><path d="M2.2 29.4V1.5h31.3v14" fill="none" stroke="#6d6d6d" stroke-width="1.3"/><path d="M1.5 29.4h20" stroke="#6d6d6d" stroke-width="1.3"/><path d="M33 14L17 34" stroke="#f3f3f3" stroke-width="3"/><g transform="translate(2 0)"><path d="M35.6 8.9L35.9 18.2L30.9 22L27.4 18.6Z" fill="#7a7a7a"/><path d="M23.1 23.5L26.4 19.9L29.8 23.3L26.3 26.6Z" fill="#7a7a7a"/><path d="M8.9 35.6L18 26.3A5 5 0 0 1 24.6 33Q22.5 35.6 18.5 35.6Z" fill="#4a80c0"/><path d="M19.5 26.8a3.6 3.6 0 0 1 4.3 4.8" fill="none" stroke="#fff" stroke-width="1.8"/></g></svg>
<div style="position:absolute;left:1154.5px;top:133.30px;font-size:15px;line-height:15px;color:#262626;font-weight:normal;white-space:nowrap;transform:scaleX(0.941);transform-origin:0 0;">Format as</div>
<div style="position:absolute;left:1163.0px;top:152.80px;font-size:15px;line-height:15px;color:#262626;font-weight:normal;white-space:nowrap;transform:scaleX(0.933);transform-origin:0 0;">Table</div>
<svg style="position:absolute;left:1201px;top:157px;" width="9" height="6" viewBox="0 0 9 6"><path d="M1 1l3.5 3.5L8 1" fill="none" stroke="#262626" stroke-width="1.3"/></svg>
<svg style="position:absolute;left:1232px;top:89px;" width="42" height="42" viewBox="0 0 42 42"><rect x="1.5" y="1.5" width="33.5" height="28" fill="#fff" stroke="#7a7a7a" stroke-width="1.2"/><rect x="9" y="9" width="17" height="12" fill="#c5d8ee"/><path d="M9 1.5v28M26 1.5v28M1.5 9h33.5M1.5 21h33.5" stroke="#8c8c8c" stroke-width="1"/><path d="M37 16L21 37" stroke="#f3f3f3" stroke-width="3"/><g transform="translate(3 3)"><path d="M35.6 8.9L35.9 18.2L30.9 22L27.4 18.6Z" fill="#7a7a7a"/><path d="M23.1 23.5L26.4 19.9L29.8 23.3L26.3 26.6Z" fill="#7a7a7a"/><path d="M8.9 35.6L18 26.3A5 5 0 0 1 24.6 33Q22.5 35.6 18.5 35.6Z" fill="#4a80c0"/><path d="M19.5 26.8a3.6 3.6 0 0 1 4.3 4.8" fill="none" stroke="#fff" stroke-width="1.8"/></g></svg>
<div style="position:absolute;left:1238.5px;top:133.30px;font-size:15px;line-height:15px;color:#262626;font-weight:normal;white-space:nowrap;transform:scaleX(0.923);transform-origin:0 0;">Cell</div>
<div style="position:absolute;left:1225.5px;top:152.80px;font-size:15px;line-height:15px;color:#262626;font-weight:normal;white-space:nowrap;transform:scaleX(0.920);transform-origin:0 0;">Styles</div>
<svg style="position:absolute;left:1267px;top:157px;" width="9" height="6" viewBox="0 0 9 6"><path d="M1 1l3.5 3.5L8 1" fill="none" stroke="#262626" stroke-width="1.3"/></svg>
<svg style="position:absolute;left:1306px;top:90px;" width="38" height="37" viewBox="0 0 38 37"><rect x="4.5" y="1.5" width="18.5" height="6.5" fill="#f6f0f6" stroke="#c8c2c8" stroke-width="1.2"/><path d="M13.7 1.5v6.5" stroke="#c8c2c8"/><rect x="18.5" y="12.5" width="18.5" height="6.5" fill="#dcd6dc" stroke="#c8c2c8" stroke-width="1.2"/><path d="M27.7 12.5v6.5" stroke="#c8c2c8"/><path d="M16 15.7H5M8.5 11L3 15.7l5.5 4.7" fill="none" stroke="#b4b4b4" stroke-width="3"/><rect x="4.5" y="23.5" width="18.5" height="12" fill="#f6f0f6" stroke="#c8c2c8" stroke-width="1.2"/><path d="M13.7 23.5v12M4.5 29.5h18.5" stroke="#c8c2c8"/></svg>
<div style="position:absolute;left:1308.5px;top:133.30px;font-size:15px;line-height:15px;color:#262626;font-weight:normal;white-space:nowrap;transform:scaleX(0.947);transform-origin:0 0;">Insert</div>
<svg style="position:absolute;left:1321px;top:157px;" width="9" height="6" viewBox="0 0 9 6"><path d="M1 1l3.5 3.5L8 1" fill="none" stroke="#262626" stroke-width="1.3"/></svg>
<svg style="position:absolute;left:1361px;top:90px;" width="38" height="37" viewBox="0 0 38 37"><rect x="1.5" y="1.5" width="18.5" height="6.5" fill="#f6f0f6" stroke="#c8c2c8" stroke-width="1.2"/><path d="M10.7 1.5v6.5" stroke="#c8c2c8"/><path d="M8.5 11.5h12.5l2.5 3-2.5 3H8.5z" fill="#dcd6dc" stroke="#c8c2c8" stroke-width="1.2"/><rect x="1.5" y="21.5" width="18.5" height="12" fill="#f6f0f6" stroke="#c8c2c8" stroke-width="1.2"/><path d="M10.7 21.5v12M1.5 27.5h18.5" stroke="#c8c2c8"/><path d="M20 8l15 14M35 8l-15 14" stroke="#b4b4b4" stroke-width="2.2"/></svg>
<div style="position:absolute;left:1357.0px;top:133.30px;font-size:15px;line-height:15px;color:#262626;font-weight:normal;white-space:nowrap;transform:scaleX(1.000);transform-origin:0 0;">Delete</div>
<svg style="position:absolute;left:1373px;top:157px;" width="9" height="6" viewBox="0 0 9 6"><path d="M1 1l3.5 3.5L8 1" fill="none" stroke="#262626" stroke-width="1.3"/></svg>
<svg style="position:absolute;left:1412px;top:89px;" width="38" height="39" viewBox="0 0 38 39"><path d="M1.5 1v6M29.5 1v6M3 4h25M6.5 1L3 4l3.5 3M25 1l3.5 3L25 7" fill="none" stroke="#3c78c8" stroke-width="1.6"/><rect x="1.5" y="9.5" width="33.5" height="24" fill="#fff" stroke="#8c8c8c" stroke-width="1.2"/><path d="M9.5 9.5v24M19.5 9.5v24M28.5 9.5v24M1.5 15.5h33.5M1.5 27.5h33.5" stroke="#8c8c8c" stroke-width="1"/><rect x="10" y="16" width="9" height="11" fill="#3c78c8"/><path d="M1.5 33.5v4h9l2-2.5h10l2-1.5" fill="none" stroke="#8c8c8c" stroke-width="1.2"/></svg>
<div style="position:absolute;left:1408.0px;top:133.30px;font-size:15px;line-height:15px;color:#262626;font-weight:normal;white-space:nowrap;transform:scaleX(0.965);transform-origin:0 0;">Format</div>
<svg style="position:absolute;left:1425px;top:157px;" width="9" height="6" viewBox="0 0 9 6"><path d="M1 1l3.5 3.5L8 1" fill="none" stroke="#262626" stroke-width="1.3"/></svg>
<svg style="position:absolute;left:1482px;top:89px;" width="18" height="18" viewBox="0 0 18 18"><path d="M16 3.5V2H2.5l6.5 7-6.5 7H16v-1.5" fill="none" stroke="#444" stroke-width="2.2" stroke-linejoin="miter"/></svg>
<div style="position:absolute;left:1505.5px;top:91.30px;font-size:15px;line-height:15px;color:#262626;font-weight:normal;white-space:nowrap;transform:scaleX(0.968);transform-origin:0 0;">AutoSum</div>
<svg style="position:absolute;left:1586px;top:96px;" width="9" height="6" viewBox="0 0 9 6"><path d="M1 1l3.5 3.5L8 1" fill="none" stroke="#262626" stroke-width="1.3"/></svg>
<svg style="position:absolute;left:1481px;top:118px;" width="19" height="19" viewBox="0 0 19 19"><rect x="1.5" y="1.5" width="15.5" height="16" fill="#fff" stroke="#6d6d6d" stroke-width="1.1"/><rect x="1" y="1" width="16.5" height="2.6" fill="#6d6d6d"/><path d="M9.2 5v9M5.5 10l3.7 4 3.7-4" fill="none" stroke="#3c78c8" stroke-width="2"/></svg>
<div style="position:absolute;left:1505.5px;top:119.30px;font-size:15px;line-height:15px;color:#262626;font-weight:normal;white-space:nowrap;transform:scaleX(0.921);transform-origin:0 0;">Fill</div>
<svg style="position:absolute;left:1528px;top:124px;" width="9" height="6" viewBox="0 0 9 6"><path d="M1 1l3.5 3.5L8 1" fill="none" stroke="#262626" stroke-width="1.3"/></svg>
<svg style="position:absolute;left:1482px;top:147px;" width="18" height="18" viewBox="0 0 18 18"><path d="M1 11.5l9.5-10 6.5 6-9.5 10z" fill="#e88a9a"/><path d="M4 8.5l6.5 6" stroke="#f3f3f3" stroke-width="1.2"/></svg>
<div style="position:absolute;left:1505.5px;top:149.30px;font-size:15px;line-height:15px;color:#262626;font-weight:normal;white-space:nowrap;transform:scaleX(0.931);transform-origin:0 0;">Clear</div>
<svg style="position:absolute;left:1543px;top:153px;" width="9" height="6" viewBox="0 0 9 6"><path d="M1 1l3.5 3.5L8 1" fill="none" stroke="#262626" stroke-width="1.3"/></svg>
<div style="position:absolute;left:1614px;top:90.76px;font-size:18px;line-height:18px;color:#3c78c8;font-weight:bold;white-space:nowrap;transform:scaleX(0.85);transform-origin:0 0;">A</div>
<div style="position:absolute;left:1615px;top:107.76px;font-size:18px;line-height:18px;color:#9b59c8;font-weight:bold;white-space:nowrap;transform:scaleX(0.9);transform-origin:0 0;">Z</div>
<svg style="position:absolute;left:1630px;top:98px;" width="20" height="19" viewBox="0 0 20 19"><path d="M1 1h18l-7 7v9h-4V8z" fill="#6d6d6d"/><path d="M9.5 8.5v7" stroke="#f3f3f3" stroke-width="1.2"/></svg>
<div style="position:absolute;left:1611.5px;top:133.30px;font-size:15px;line-height:15px;color:#262626;font-weight:normal;white-space:nowrap;transform:scaleX(1.000);transform-origin:0 0;">Sort &amp;</div>
<div style="position:absolute;left:1609.5px;top:152.80px;font-size:15px;line-height:15px;color:#262626;font-weight:normal;white-space:nowrap;transform:scaleX(0.970);transform-origin:0 0;">Filter</div>
<svg style="position:absolute;left:1646px;top:157px;" width="9" height="6" viewBox="0 0 9 6"><path d="M1 1l3.5 3.5L8 1" fill="none" stroke="#262626" stroke-width="1.3"/></svg>
<svg style="position:absolute;left:1671px;top:89px;" width="37" height="37" viewBox="0 0 37 37"><circle cx="22.4" cy="14" r="10.7" fill="#fff" stroke="#3c78c8" stroke-width="2.4"/><path d="M3.5 33l10-9" stroke="#3c78c8" stroke-width="4.2" stroke-linecap="round"/></svg>
<div style="position:absolute;left:1667.5px;top:133.30px;font-size:15px;line-height:15px;color:#262626;font-weight:normal;white-space:nowrap;transform:scaleX(1.000);transform-origin:0 0;">Find &amp;</div>
<div style="position:absolute;left:1663.0px;top:152.80px;font-size:15px;line-height:15px;color:#262626;font-weight:normal;white-space:nowrap;transform:scaleX(0.902);transform-origin:0 0;">Select</div>
<svg style="position:absolute;left:1706px;top:157px;" width="9" height="6" viewBox="0 0 9 6"><path d="M1 1l3.5 3.5L8 1" fill="none" stroke="#262626" stroke-width="1.3"/></svg>
<svg style="position:absolute;left:1756px;top:96px;" width="22" height="22" viewBox="0 0 22 22"><defs><filter id="bl"><feGaussianBlur stdDeviation="0.6"/></filter></defs><circle cx="10.6" cy="10.4" r="6.3" fill="#ff8c00" filter="url(#bl)"/></svg>
<div style="position:absolute;left:1742.5px;top:133.30px;font-size:15px;line-height:15px;color:#262626;font-weight:normal;white-space:nowrap;transform:scaleX(1.012);transform-origin:0 0;">Add-ins</div>
<svg style="position:absolute;left:1834px;top:91px;" width="36" height="38" viewBox="0 0 36 38"><path d="M13 30.5H4.5a2 2 0 0 1-2-2V4.5a2 2 0 0 1 2-2h13.5l6.5 6.5v8" fill="none" stroke="#2d6fe0" stroke-width="1.5" stroke-linejoin="round"/><path d="M10.5 6.5q-1 7-5.5 15.5q2-4 8-6q5-1 7-.5q-5-1-9.5-9" fill="none" stroke="#2d6fe0" stroke-width="0.9"/><rect x="13.5" y="27" width="11" height="6.5" rx="3.2" transform="rotate(-45 19 30.2)" fill="none" stroke="#2d6fe0" stroke-width="1.6"/><rect x="21" y="19.5" width="11" height="6.5" rx="3.2" transform="rotate(-45 26.5 22.7)" fill="none" stroke="#2d6fe0" stroke-width="1.6"/></svg>
<div style="position:absolute;left:1825.5px;top:133.30px;font-size:15px;line-height:15px;color:#262626;font-weight:normal;white-space:nowrap;transform:scaleX(0.947);transform-origin:0 0;">Create</div>
<div style="position:absolute;left:1828.5px;top:152.80px;font-size:15px;line-height:15px;color:#262626;font-weight:normal;white-space:nowrap;transform:scaleX(0.874);transform-origin:0 0;">a PDF</div>
<svg style="position:absolute;left:1896px;top:183px;" width="14" height="8" viewBox="0 0 14 8"><path d="M1 7l6-6 6 6" fill="none" stroke="#444" stroke-width="1.3"/></svg>
<div style="position:absolute;left:0px;top:196px;width:1920px;height:54px;background:#e6e6e6;"></div>
<div style="position:absolute;left:6px;top:208px;width:127px;height:30px;background:#fff;border:1px solid #c6c6c6;"></div>
<div style="position:absolute;left:14px;top:216.30px;font-size:15px;line-height:15px;color:#262626;font-weight:normal;white-space:nowrap;">A1</div>
<svg style="position:absolute;left:117px;top:221px;" width="8" height="5" viewBox="0 0 8 5"><path d="M0 0h8L4 4.5z" fill="#6d6d6d"/></svg>
<div style="position:absolute;left:150px;top:215px;width:3px;height:3px;background:#b4b4b4;"></div>
<div style="position:absolute;left:150px;top:221px;width:3px;height:3px;background:#b4b4b4;"></div>
<div style="position:absolute;left:150px;top:227px;width:3px;height:3px;background:#b4b4b4;"></div>
<div style="position:absolute;left:170px;top:208px;width:137px;height:30px;background:#fff;border:1px solid #c8c8c8;"></div>
<svg style="position:absolute;left:185px;top:217px;" width="15" height="14" viewBox="0 0 15 14"><path d="M1 1l13 12M14 1L1 13" stroke="#bdbdbd" stroke-width="2"/></svg>
<svg style="position:absolute;left:229px;top:216px;" width="18" height="15" viewBox="0 0 18 15"><path d="M1.5 7.5l5 5.5L16.5 1.5" fill="none" stroke="#bdbdbd" stroke-width="2.8"/></svg>
<div style="position:absolute;left:274px;top:212.07px;font-size:20px;line-height:20px;color:#6d6d6d;font-weight:bold;white-space:nowrap;font-family:Liberation Serif, serif;"><i>f</i><i style="font-size:16px">x</i></div>
<div style="position:absolute;left:310px;top:208px;width:1605px;height:30px;background:#fff;border:1px solid #c8c8c8;"></div>
<div style="position:absolute;left:324.0px;top:216.30px;font-size:15px;line-height:15px;color:#262626;font-weight:normal;white-space:nowrap;transform:scaleX(0.971);transform-origin:0 0;">CUSTOMER</div>
<svg style="position:absolute;left:1897px;top:220px;" width="12" height="8" viewBox="0 0 12 8"><path d="M1.2 1.2l4.8 4.8 4.8-4.8" fill="none" stroke="#6d6d6d" stroke-width="2.4"/></svg>
<div style="position:absolute;left:0px;top:250px;width:1920px;height:26px;background:#e6e6e6;"></div>
<div style="position:absolute;left:37px;top:250px;width:230px;height:25px;background:#d2d2d2;"></div>
<div style="position:absolute;left:0px;top:275px;width:1894px;height:1px;background:#ababab;"></div>
<div style="position:absolute;left:267px;top:250px;width:1px;height:25px;background:#c8c8c8;"></div>
<div style="position:absolute;left:101.50px;top:255.61px;width:100px;text-align:center;font-size:17px;line-height:17px;color:#217346;font-weight:normal;white-space:nowrap;">A</div>
<div style="position:absolute;left:498px;top:250px;width:1px;height:25px;background:#c8c8c8;"></div>
<div style="position:absolute;left:332.50px;top:255.61px;width:100px;text-align:center;font-size:17px;line-height:17px;color:#262626;font-weight:normal;white-space:nowrap;">B</div>
<div style="position:absolute;left:757px;top:250px;width:1px;height:25px;background:#c8c8c8;"></div>
<div style="position:absolute;left:577.50px;top:255.61px;width:100px;text-align:center;font-size:17px;line-height:17px;color:#262626;font-weight:normal;white-space:nowrap;">C</div>
<div style="position:absolute;left:988px;top:250px;width:1px;height:25px;background:#c8c8c8;"></div>
<div style="position:absolute;left:822.50px;top:255.61px;width:100px;text-align:center;font-size:17px;line-height:17px;color:#262626;font-weight:normal;white-space:nowrap;">D</div>
<div style="position:absolute;left:1219px;top:250px;width:1px;height:25px;background:#c8c8c8;"></div>
<div style="position:absolute;left:1053.50px;top:255.61px;width:100px;text-align:center;font-size:17px;line-height:17px;color:#262626;font-weight:normal;white-space:nowrap;">E</div>
<div style="position:absolute;left:1450px;top:250px;width:1px;height:25px;background:#c8c8c8;"></div>
<div style="position:absolute;left:1284.50px;top:255.61px;width:100px;text-align:center;font-size:17px;line-height:17px;color:#262626;font-weight:normal;white-space:nowrap;">F</div>
<div style="position:absolute;left:1681px;top:250px;width:1px;height:25px;background:#c8c8c8;"></div>
<div style="position:absolute;left:1515.50px;top:255.61px;width:100px;text-align:center;font-size:17px;line-height:17px;color:#262626;font-weight:normal;white-space:nowrap;">G</div>
<div style="position:absolute;left:1746.50px;top:255.61px;width:100px;text-align:center;font-size:17px;line-height:17px;color:#262626;font-weight:normal;white-space:nowrap;">H</div>
<svg style="position:absolute;left:15px;top:254px;" width="19" height="18" viewBox="0 0 19 18"><path d="M18 0V18H0z" fill="#b4b4b4"/></svg>
<div style="position:absolute;left:0px;top:276px;width:36px;height:685px;background:#e6e6e6;"></div>
<div style="position:absolute;left:0px;top:276px;width:36px;height:32px;background:#d2d2d2;"></div>
<div style="position:absolute;left:36px;top:250px;width:1px;height:711px;background:#ababab;"></div>
<div style="position:absolute;left:37px;top:276px;width:1857px;height:685px;background:#ffffff;"></div>
<div style="position:absolute;left:37px;top:276px;width:230px;height:31px;background:#4f81bd;"></div>
<div style="position:absolute;left:268px;top:276px;width:230px;height:31px;background:#4f81bd;"></div>
<div style="position:absolute;left:499px;top:276px;width:258px;height:31px;background:#4f81bd;"></div>
<div style="position:absolute;left:758px;top:276px;width:230px;height:31px;background:#4f81bd;"></div>
<div style="position:absolute;left:989px;top:276px;width:230px;height:31px;background:#4f81bd;"></div>
<div style="position:absolute;left:1220px;top:276px;width:230px;height:31px;background:#4f81bd;"></div>
<div style="position:absolute;left:1451px;top:276px;width:230px;height:31px;background:#4f81bd;"></div>
<div style="position:absolute;left:1682px;top:276px;width:212px;height:31px;background:#4f81bd;"></div>
<div style="position:absolute;left:0;top:0;width:1920px;height:961px;overflow:hidden;">
<div style="position:absolute;left:37px;top:310px;width:230px;height:31px;background:#b8cce4;"></div>
<div style="position:absolute;left:41.50px;top:320.76px;width:220px;text-align:center;font-size:18px;line-height:18px;color:#000000;font-weight:normal;white-space:nowrap;transform:scaleX(0.9);">BST Lab</div>
<div style="position:absolute;left:268px;top:310px;width:230px;height:31px;background:#b8cce4;"></div>
<div style="position:absolute;left:272.50px;top:320.76px;width:220px;text-align:center;font-size:18px;line-height:18px;color:#000000;font-weight:normal;white-space:nowrap;">Medicines</div>
<div style="position:absolute;left:499px;top:310px;width:258px;height:31px;background:#b8cce4;"></div>
<div style="position:absolute;left:517.50px;top:320.76px;width:220px;text-align:center;font-size:18px;line-height:18px;color:#000000;font-weight:normal;white-space:nowrap;">Kolkata</div>
<div style="position:absolute;left:758px;top:310px;width:230px;height:31px;background:#b8cce4;"></div>
<div style="position:absolute;left:762.50px;top:320.76px;width:220px;text-align:center;font-size:18px;line-height:18px;color:#000000;font-weight:normal;white-space:nowrap;">1</div>
<div style="position:absolute;left:989px;top:310px;width:230px;height:31px;background:#b8cce4;"></div>
<div style="position:absolute;left:993.50px;top:320.76px;width:220px;text-align:center;font-size:18px;line-height:18px;color:#000000;font-weight:normal;white-space:nowrap;transform:scaleX(1.07);">Mahesh Mathur</div>
<div style="position:absolute;left:1220px;top:310px;width:230px;height:31px;background:#b8cce4;"></div>
<div style="position:absolute;left:1224.50px;top:320.76px;width:220px;text-align:center;font-size:18px;line-height:18px;color:#000000;font-weight:normal;white-space:nowrap;">13-04-2012</div>
<div style="position:absolute;left:1451px;top:310px;width:230px;height:31px;background:#b8cce4;"></div>
<div style="position:absolute;left:1455.50px;top:320.76px;width:220px;text-align:center;font-size:18px;line-height:18px;color:#000000;font-weight:normal;white-space:nowrap;">24,640</div>
<div style="position:absolute;left:1682px;top:310px;width:212px;height:31px;background:#b8cce4;"></div>
<div style="position:absolute;left:1686.50px;top:320.76px;width:220px;text-align:center;font-size:18px;line-height:18px;color:#000000;font-weight:normal;white-space:nowrap;">2012</div>
<div style="position:absolute;left:0px;top:341px;width:36px;height:1px;background:#bababa;"></div>
<div style="position:absolute;left:0.00px;top:321.61px;width:36px;text-align:center;font-size:17px;line-height:17px;color:#111111;font-weight:normal;white-space:nowrap;">2</div>
<div style="position:absolute;left:37px;top:342px;width:230px;height:32px;background:#dce6f1;"></div>
<div style="position:absolute;left:41.50px;top:353.76px;width:220px;text-align:center;font-size:18px;line-height:18px;color:#000000;font-weight:normal;white-space:nowrap;transform:scaleX(0.9);">BST Lab</div>
<div style="position:absolute;left:268px;top:342px;width:230px;height:32px;background:#dce6f1;"></div>
<div style="position:absolute;left:272.50px;top:353.76px;width:220px;text-align:center;font-size:18px;line-height:18px;color:#000000;font-weight:normal;white-space:nowrap;">Medicines</div>
<div style="position:absolute;left:499px;top:342px;width:258px;height:32px;background:#dce6f1;"></div>
<div style="position:absolute;left:517.50px;top:353.76px;width:220px;text-align:center;font-size:18px;line-height:18px;color:#000000;font-weight:normal;white-space:nowrap;">Kolkata</div>
<div style="position:absolute;left:758px;top:342px;width:230px;height:32px;background:#dce6f1;"></div>
<div style="position:absolute;left:762.50px;top:353.76px;width:220px;text-align:center;font-size:18px;line-height:18px;color:#000000;font-weight:normal;white-space:nowrap;">0</div>
<div style="position:absolute;left:989px;top:342px;width:230px;height:32px;background:#dce6f1;"></div>
<div style="position:absolute;left:993.50px;top:353.76px;width:220px;text-align:center;font-size:18px;line-height:18px;color:#000000;font-weight:normal;white-space:nowrap;transform:scaleX(1.07);">Mahesh Mathur</div>
<div style="position:absolute;left:1220px;top:342px;width:230px;height:32px;background:#dce6f1;"></div>
<div style="position:absolute;left:1224.50px;top:353.76px;width:220px;text-align:center;font-size:18px;line-height:18px;color:#000000;font-weight:normal;white-space:nowrap;">21-12-2012</div>
<div style="position:absolute;left:1451px;top:342px;width:230px;height:32px;background:#dce6f1;"></div>
<div style="position:absolute;left:1455.50px;top:353.76px;width:220px;text-align:center;font-size:18px;line-height:18px;color:#000000;font-weight:normal;white-space:nowrap;">54,000</div>
<div style="position:absolute;left:1682px;top:342px;width:212px;height:32px;background:#dce6f1;"></div>
<div style="position:absolute;left:1686.50px;top:353.76px;width:220px;text-align:center;font-size:18px;line-height:18px;color:#000000;font-weight:normal;white-space:nowrap;">2012</div>
<div style="position:absolute;left:0px;top:374px;width:36px;height:1px;background:#bababa;"></div>
<div style="position:absolute;left:0.00px;top:354.61px;width:36px;text-align:center;font-size:17px;line-height:17px;color:#111111;font-weight:normal;white-space:nowrap;">3</div>
<div style="position:absolute;left:37px;top:375px;width:230px;height:32px;background:#b8cce4;"></div>
<div style="position:absolute;left:41.50px;top:386.76px;width:220px;text-align:center;font-size:18px;line-height:18px;color:#000000;font-weight:normal;white-space:nowrap;transform:scaleX(0.9);">BST Lab</div>
<div style="position:absolute;left:268px;top:375px;width:230px;height:32px;background:#b8cce4;"></div>
<div style="position:absolute;left:272.50px;top:386.76px;width:220px;text-align:center;font-size:18px;line-height:18px;color:#000000;font-weight:normal;white-space:nowrap;">Medicines</div>
<div style="position:absolute;left:499px;top:375px;width:258px;height:32px;background:#b8cce4;"></div>
<div style="position:absolute;left:517.50px;top:386.76px;width:220px;text-align:center;font-size:18px;line-height:18px;color:#000000;font-weight:normal;white-space:nowrap;">Kolkata</div>
<div style="position:absolute;left:758px;top:375px;width:230px;height:32px;background:#b8cce4;"></div>
<div style="position:absolute;left:762.50px;top:386.76px;width:220px;text-align:center;font-size:18px;line-height:18px;color:#000000;font-weight:normal;white-space:nowrap;">0</div>
<div style="position:absolute;left:989px;top:375px;width:230px;height:32px;background:#b8cce4;"></div>
<div style="position:absolute;left:993.50px;top:386.76px;width:220px;text-align:center;font-size:18px;line-height:18px;color:#000000;font-weight:normal;white-space:nowrap;transform:scaleX(1.07);">Mahesh Mathur</div>
<div style="position:absolute;left:1220px;top:375px;width:230px;height:32px;background:#b8cce4;"></div>
<div style="position:absolute;left:1224.50px;top:386.76px;width:220px;text-align:center;font-size:18px;line-height:18px;color:#000000;font-weight:normal;white-space:nowrap;">24-12-2012</div>
<div style="position:absolute;left:1451px;top:375px;width:230px;height:32px;background:#b8cce4;"></div>
<div style="position:absolute;left:1455.50px;top:386.76px;width:220px;text-align:center;font-size:18px;line-height:18px;color:#000000;font-weight:normal;white-space:nowrap;">29,923</div>
<div style="position:absolute;left:1682px;top:375px;width:212px;height:32px;background:#b8cce4;"></div>
<div style="position:absolute;left:1686.50px;top:386.76px;width:220px;text-align:center;font-size:18px;line-height:18px;color:#000000;font-weight:normal;white-space:nowrap;">2012</div>
<div style="position:absolute;left:0px;top:407px;width:36px;height:1px;background:#bababa;"></div>
<div style="position:absolute;left:0.00px;top:387.61px;width:36px;text-align:center;font-size:17px;line-height:17px;color:#111111;font-weight:normal;white-space:nowrap;">4</div>
<div style="position:absolute;left:37px;top:408px;width:230px;height:32px;background:#dce6f1;"></div>
<div style="position:absolute;left:41.50px;top:419.76px;width:220px;text-align:center;font-size:18px;line-height:18px;color:#000000;font-weight:normal;white-space:nowrap;transform:scaleX(0.9);">BST Lab</div>
<div style="position:absolute;left:268px;top:408px;width:230px;height:32px;background:#dce6f1;"></div>
<div style="position:absolute;left:272.50px;top:419.76px;width:220px;text-align:center;font-size:18px;line-height:18px;color:#000000;font-weight:normal;white-space:nowrap;">Medicines</div>
<div style="position:absolute;left:499px;top:408px;width:258px;height:32px;background:#dce6f1;"></div>
<div style="position:absolute;left:517.50px;top:419.76px;width:220px;text-align:center;font-size:18px;line-height:18px;color:#000000;font-weight:normal;white-space:nowrap;">Kolkata</div>
<div style="position:absolute;left:758px;top:408px;width:230px;height:32px;background:#dce6f1;"></div>
<div style="position:absolute;left:762.50px;top:419.76px;width:220px;text-align:center;font-size:18px;line-height:18px;color:#000000;font-weight:normal;white-space:nowrap;">0</div>
<div style="position:absolute;left:989px;top:408px;width:230px;height:32px;background:#dce6f1;"></div>
<div style="position:absolute;left:993.50px;top:419.76px;width:220px;text-align:center;font-size:18px;line-height:18px;color:#000000;font-weight:normal;white-space:nowrap;transform:scaleX(1.07);">Mahesh Mathur</div>
<div style="position:absolute;left:1220px;top:408px;width:230px;height:32px;background:#dce6f1;"></div>
<div style="position:absolute;left:1224.50px;top:419.76px;width:220px;text-align:center;font-size:18px;line-height:18px;color:#000000;font-weight:normal;white-space:nowrap;">24-12-2012</div>
<div style="position:absolute;left:1451px;top:408px;width:230px;height:32px;background:#dce6f1;"></div>
<div style="position:absolute;left:1455.50px;top:419.76px;width:220px;text-align:center;font-size:18px;line-height:18px;color:#000000;font-weight:normal;white-space:nowrap;">66,901</div>
<div style="position:absolute;left:1682px;top:408px;width:212px;height:32px;background:#dce6f1;"></div>
<div style="position:absolute;left:1686.50px;top:419.76px;width:220px;text-align:center;font-size:18px;line-height:18px;color:#000000;font-weight:normal;white-space:nowrap;">2012</div>
<div style="position:absolute;left:0px;top:440px;width:36px;height:1px;background:#bababa;"></div>
<div style="position:absolute;left:0.00px;top:420.61px;width:36px;text-align:center;font-size:17px;line-height:17px;color:#111111;font-weight:normal;white-space:nowrap;">5</div>
<div style="position:absolute;left:37px;top:441px;width:230px;height:32px;background:#b8cce4;"></div>
<div style="position:absolute;left:41.50px;top:452.76px;width:220px;text-align:center;font-size:18px;line-height:18px;color:#000000;font-weight:normal;white-space:nowrap;transform:scaleX(0.9);">BST Lab</div>
<div style="position:absolute;left:268px;top:441px;width:230px;height:32px;background:#b8cce4;"></div>
<div style="position:absolute;left:272.50px;top:452.76px;width:220px;text-align:center;font-size:18px;line-height:18px;color:#000000;font-weight:normal;white-space:nowrap;">Medicines</div>
<div style="position:absolute;left:499px;top:441px;width:258px;height:32px;background:#b8cce4;"></div>
<div style="position:absolute;left:517.50px;top:452.76px;width:220px;text-align:center;font-size:18px;line-height:18px;color:#000000;font-weight:normal;white-space:nowrap;">Kolkata</div>
<div style="position:absolute;left:758px;top:441px;width:230px;height:32px;background:#b8cce4;"></div>
<div style="position:absolute;left:762.50px;top:452.76px;width:220px;text-align:center;font-size:18px;line-height:18px;color:#000000;font-weight:normal;white-space:nowrap;">0</div>
<div style="position:absolute;left:989px;top:441px;width:230px;height:32px;background:#b8cce4;"></div>
<div style="position:absolute;left:993.50px;top:452.76px;width:220px;text-align:center;font-size:18px;line-height:18px;color:#000000;font-weight:normal;white-space:nowrap;transform:scaleX(1.07);">Mahesh Mathur</div>
<div style="position:absolute;left:1220px;top:441px;width:230px;height:32px;background:#b8cce4;"></div>
<div style="position:absolute;left:1224.50px;top:452.76px;width:220px;text-align:center;font-size:18px;line-height:18px;color:#000000;font-weight:normal;white-space:nowrap;">29-12-2012</div>
<div style="position:absolute;left:1451px;top:441px;width:230px;height:32px;background:#b8cce4;"></div>
<div style="position:absolute;left:1455.50px;top:452.76px;width:220px;text-align:center;font-size:18px;line-height:18px;color:#000000;font-weight:normal;white-space:nowrap;">63,116</div>
<div style="position:absolute;left:1682px;top:441px;width:212px;height:32px;background:#b8cce4;"></div>
<div style="position:absolute;left:1686.50px;top:452.76px;width:220px;text-align:center;font-size:18px;line-height:18px;color:#000000;font-weight:normal;white-space:nowrap;">2012</div>
<div style="position:absolute;left:0px;top:473px;width:36px;height:1px;background:#bababa;"></div>
<div style="position:absolute;left:0.00px;top:453.61px;width:36px;text-align:center;font-size:17px;line-height:17px;color:#111111;font-weight:normal;white-space:nowrap;">6</div>
<div style="position:absolute;left:37px;top:474px;width:230px;height:32px;background:#dce6f1;"></div>
<div style="position:absolute;left:41.50px;top:485.76px;width:220px;text-align:center;font-size:18px;line-height:18px;color:#000000;font-weight:normal;white-space:nowrap;transform:scaleX(0.9);">BST Lab</div>
<div style="position:absolute;left:268px;top:474px;width:230px;height:32px;background:#dce6f1;"></div>
<div style="position:absolute;left:272.50px;top:485.76px;width:220px;text-align:center;font-size:18px;line-height:18px;color:#000000;font-weight:normal;white-space:nowrap;">Medicines</div>
<div style="position:absolute;left:499px;top:474px;width:258px;height:32px;background:#dce6f1;"></div>
<div style="position:absolute;left:517.50px;top:485.76px;width:220px;text-align:center;font-size:18px;line-height:18px;color:#000000;font-weight:normal;white-space:nowrap;">Kolkata</div>
<div style="position:absolute;left:758px;top:474px;width:230px;height:32px;background:#dce6f1;"></div>
<div style="position:absolute;left:762.50px;top:485.76px;width:220px;text-align:center;font-size:18px;line-height:18px;color:#000000;font-weight:normal;white-space:nowrap;">0</div>
<div style="position:absolute;left:989px;top:474px;width:230px;height:32px;background:#dce6f1;"></div>
<div style="position:absolute;left:993.50px;top:485.76px;width:220px;text-align:center;font-size:18px;line-height:18px;color:#000000;font-weight:normal;white-space:nowrap;transform:scaleX(1.07);">Mahesh Mathur</div>
<div style="position:absolute;left:1220px;top:474px;width:230px;height:32px;background:#dce6f1;"></div>
<div style="position:absolute;left:1224.50px;top:485.76px;width:220px;text-align:center;font-size:18px;line-height:18px;color:#000000;font-weight:normal;white-space:nowrap;">28-06-2012</div>
<div style="position:absolute;left:1451px;top:474px;width:230px;height:32px;background:#dce6f1;"></div>
<div style="position:absolute;left:1455.50px;top:485.76px;width:220px;text-align:center;font-size:18px;line-height:18px;color:#000000;font-weight:normal;white-space:nowrap;">38,281</div>
<div style="position:absolute;left:1682px;top:474px;width:212px;height:32px;background:#dce6f1;"></div>
<div style="position:absolute;left:1686.50px;top:485.76px;width:220px;text-align:center;font-size:18px;line-height:18px;color:#000000;font-weight:normal;white-space:nowrap;">2012</div>
<div style="position:absolute;left:0px;top:506px;width:36px;height:1px;background:#bababa;"></div>
<div style="position:absolute;left:0.00px;top:486.61px;width:36px;text-align:center;font-size:17px;line-height:17px;color:#111111;font-weight:normal;white-space:nowrap;">7</div>
<div style="position:absolute;left:37px;top:507px;width:230px;height:32px;background:#b8cce4;"></div>
<div style="position:absolute;left:41.50px;top:518.76px;width:220px;text-align:center;font-size:18px;line-height:18px;color:#000000;font-weight:normal;white-space:nowrap;transform:scaleX(0.9);">BST Lab</div>
<div style="position:absolute;left:268px;top:507px;width:230px;height:32px;background:#b8cce4;"></div>
<div style="position:absolute;left:272.50px;top:518.76px;width:220px;text-align:center;font-size:18px;line-height:18px;color:#000000;font-weight:normal;white-space:nowrap;">Medicines</div>
<div style="position:absolute;left:499px;top:507px;width:258px;height:32px;background:#b8cce4;"></div>
<div style="position:absolute;left:517.50px;top:518.76px;width:220px;text-align:center;font-size:18px;line-height:18px;color:#000000;font-weight:normal;white-space:nowrap;">Kolkata</div>
<div style="position:absolute;left:758px;top:507px;width:230px;height:32px;background:#b8cce4;"></div>
<div style="position:absolute;left:762.50px;top:518.76px;width:220px;text-align:center;font-size:18px;line-height:18px;color:#000000;font-weight:normal;white-space:nowrap;">0</div>
<div style="position:absolute;left:989px;top:507px;width:230px;height:32px;background:#b8cce4;"></div>
<div style="position:absolute;left:993.50px;top:518.76px;width:220px;text-align:center;font-size:18px;line-height:18px;color:#000000;font-weight:normal;white-space:nowrap;transform:scaleX(1.07);">Mahesh Mathur</div>
<div style="position:absolute;left:1220px;top:507px;width:230px;height:32px;background:#b8cce4;"></div>
<div style="position:absolute;left:1224.50px;top:518.76px;width:220px;text-align:center;font-size:18px;line-height:18px;color:#000000;font-weight:normal;white-space:nowrap;">28-06-2012</div>
<div style="position:absolute;left:1451px;top:507px;width:230px;height:32px;background:#b8cce4;"></div>
<div style="position:absolute;left:1455.50px;top:518.76px;width:220px;text-align:center;font-size:18px;line-height:18px;color:#000000;font-weight:normal;white-space:nowrap;">57,650</div>
<div style="position:absolute;left:1682px;top:507px;width:212px;height:32px;background:#b8cce4;"></div>
<div style="position:absolute;left:1686.50px;top:518.76px;width:220px;text-align:center;font-size:18px;line-height:18px;color:#000000;font-weight:normal;white-space:nowrap;">2012</div>
<div style="position:absolute;left:0px;top:539px;width:36px;height:1px;background:#bababa;"></div>
<div style="position:absolute;left:0.00px;top:519.61px;width:36px;text-align:center;font-size:17px;line-height:17px;color:#111111;font-weight:normal;white-space:nowrap;">8</div>
<div style="position:absolute;left:37px;top:540px;width:230px;height:32px;background:#dce6f1;"></div>
<div style="position:absolute;left:41.50px;top:551.76px;width:220px;text-align:center;font-size:18px;line-height:18px;color:#000000;font-weight:normal;white-space:nowrap;transform:scaleX(0.9);">BST Lab</div>
<div style="position:absolute;left:268px;top:540px;width:230px;height:32px;background:#dce6f1;"></div>
<div style="position:absolute;left:272.50px;top:551.76px;width:220px;text-align:center;font-size:18px;line-height:18px;color:#000000;font-weight:normal;white-space:nowrap;">Medicines</div>
<div style="position:absolute;left:499px;top:540px;width:258px;height:32px;background:#dce6f1;"></div>
<div style="position:absolute;left:517.50px;top:551.76px;width:220px;text-align:center;font-size:18px;line-height:18px;color:#000000;font-weight:normal;white-space:nowrap;">Kolkata</div>
<div style="position:absolute;left:758px;top:540px;width:230px;height:32px;background:#dce6f1;"></div>
<div style="position:absolute;left:762.50px;top:551.76px;width:220px;text-align:center;font-size:18px;line-height:18px;color:#000000;font-weight:normal;white-space:nowrap;">0</div>
<div style="position:absolute;left:989px;top:540px;width:230px;height:32px;background:#dce6f1;"></div>
<div style="position:absolute;left:993.50px;top:551.76px;width:220px;text-align:center;font-size:18px;line-height:18px;color:#000000;font-weight:normal;white-space:nowrap;transform:scaleX(1.07);">Mahesh Mathur</div>
<div style="position:absolute;left:1220px;top:540px;width:230px;height:32px;background:#dce6f1;"></div>
<div style="position:absolute;left:1224.50px;top:551.76px;width:220px;text-align:center;font-size:18px;line-height:18px;color:#000000;font-weight:normal;white-space:nowrap;">29-06-2012</div>
<div style="position:absolute;left:1451px;top:540px;width:230px;height:32px;background:#dce6f1;"></div>
<div style="position:absolute;left:1455.50px;top:551.76px;width:220px;text-align:center;font-size:18px;line-height:18px;color:#000000;font-weight:normal;white-space:nowrap;">90,967</div>
<div style="position:absolute;left:1682px;top:540px;width:212px;height:32px;background:#dce6f1;"></div>
<div style="position:absolute;left:1686.50px;top:551.76px;width:220px;text-align:center;font-size:18px;line-height:18px;color:#000000;font-weight:normal;white-space:nowrap;">2012</div>
<div style="position:absolute;left:0px;top:572px;width:36px;height:1px;background:#bababa;"></div>
<div style="position:absolute;left:0.00px;top:552.61px;width:36px;text-align:center;font-size:17px;line-height:17px;color:#111111;font-weight:normal;white-space:nowrap;">9</div>
<div style="position:absolute;left:37px;top:573px;width:230px;height:32px;background:#b8cce4;"></div>
<div style="position:absolute;left:41.50px;top:584.76px;width:220px;text-align:center;font-size:18px;line-height:18px;color:#000000;font-weight:normal;white-space:nowrap;transform:scaleX(0.9);">BST Lab</div>
<div style="position:absolute;left:268px;top:573px;width:230px;height:32px;background:#b8cce4;"></div>
<div style="position:absolute;left:272.50px;top:584.76px;width:220px;text-align:center;font-size:18px;line-height:18px;color:#000000;font-weight:normal;white-space:nowrap;">Medicines</div>
<div style="position:absolute;left:499px;top:573px;width:258px;height:32px;background:#b8cce4;"></div>
<div style="position:absolute;left:517.50px;top:584.76px;width:220px;text-align:center;font-size:18px;line-height:18px;color:#000000;font-weight:normal;white-space:nowrap;">Kolkata</div>
<div style="position:absolute;left:758px;top:573px;width:230px;height:32px;background:#b8cce4;"></div>
<div style="position:absolute;left:762.50px;top:584.76px;width:220px;text-align:center;font-size:18px;line-height:18px;color:#000000;font-weight:normal;white-space:nowrap;">0</div>
<div style="position:absolute;left:989px;top:573px;width:230px;height:32px;background:#b8cce4;"></div>
<div style="position:absolute;left:993.50px;top:584.76px;width:220px;text-align:center;font-size:18px;line-height:18px;color:#000000;font-weight:normal;white-space:nowrap;transform:scaleX(1.07);">Mahesh Mathur</div>
<div style="position:absolute;left:1220px;top:573px;width:230px;height:32px;background:#b8cce4;"></div>
<div style="position:absolute;left:1224.50px;top:584.76px;width:220px;text-align:center;font-size:18px;line-height:18px;color:#000000;font-weight:normal;white-space:nowrap;">29-06-2012</div>
<div style="position:absolute;left:1451px;top:573px;width:230px;height:32px;background:#b8cce4;"></div>
<div style="position:absolute;left:1455.50px;top:584.76px;width:220px;text-align:center;font-size:18px;line-height:18px;color:#000000;font-weight:normal;white-space:nowrap;">11,910</div>
<div style="position:absolute;left:1682px;top:573px;width:212px;height:32px;background:#b8cce4;"></div>
<div style="position:absolute;left:1686.50px;top:584.76px;width:220px;text-align:center;font-size:18px;line-height:18px;color:#000000;font-weight:normal;white-space:nowrap;">2012</div>
<div style="position:absolute;left:0px;top:605px;width:36px;height:1px;background:#bababa;"></div>
<div style="position:absolute;left:0.00px;top:585.61px;width:36px;text-align:center;font-size:17px;line-height:17px;color:#111111;font-weight:normal;white-space:nowrap;">10</div>
<div style="position:absolute;left:37px;top:606px;width:230px;height:32px;background:#dce6f1;"></div>
<div style="position:absolute;left:41.50px;top:617.76px;width:220px;text-align:center;font-size:18px;line-height:18px;color:#000000;font-weight:normal;white-space:nowrap;transform:scaleX(0.9);">BST Lab</div>
<div style="position:absolute;left:268px;top:606px;width:230px;height:32px;background:#dce6f1;"></div>
<div style="position:absolute;left:272.50px;top:617.76px;width:220px;text-align:center;font-size:18px;line-height:18px;color:#000000;font-weight:normal;white-space:nowrap;">Medicines</div>
<div style="position:absolute;left:499px;top:606px;width:258px;height:32px;background:#dce6f1;"></div>
<div style="position:absolute;left:517.50px;top:617.76px;width:220px;text-align:center;font-size:18px;line-height:18px;color:#000000;font-weight:normal;white-space:nowrap;">Kolkata</div>
<div style="position:absolute;left:758px;top:606px;width:230px;height:32px;background:#dce6f1;"></div>
<div style="position:absolute;left:762.50px;top:617.76px;width:220px;text-align:center;font-size:18px;line-height:18px;color:#000000;font-weight:normal;white-space:nowrap;">0</div>
<div style="position:absolute;left:989px;top:606px;width:230px;height:32px;background:#dce6f1;"></div>
<div style="position:absolute;left:993.50px;top:617.76px;width:220px;text-align:center;font-size:18px;line-height:18px;color:#000000;font-weight:normal;white-space:nowrap;transform:scaleX(1.07);">Mahesh Mathur</div>
<div style="position:absolute;left:1220px;top:606px;width:230px;height:32px;background:#dce6f1;"></div>
<div style="position:absolute;left:1224.50px;top:617.76px;width:220px;text-align:center;font-size:18px;line-height:18px;color:#000000;font-weight:normal;white-space:nowrap;">06-07-2012</div>
<div style="position:absolute;left:1451px;top:606px;width:230px;height:32px;background:#dce6f1;"></div>
<div style="position:absolute;left:1455.50px;top:617.76px;width:220px;text-align:center;font-size:18px;line-height:18px;color:#000000;font-weight:normal;white-space:nowrap;">59,531</div>
<div style="position:absolute;left:1682px;top:606px;width:212px;height:32px;background:#dce6f1;"></div>
<div style="position:absolute;left:1686.50px;top:617.76px;width:220px;text-align:center;font-size:18px;line-height:18px;color:#000000;font-weight:normal;white-space:nowrap;">2012</div>
<div style="position:absolute;left:0px;top:638px;width:36px;height:1px;background:#bababa;"></div>
<div style="position:absolute;left:0.00px;top:618.61px;width:36px;text-align:center;font-size:17px;line-height:17px;color:#111111;font-weight:normal;white-space:nowrap;">11</div>
<div style="position:absolute;left:37px;top:639px;width:230px;height:32px;background:#b8cce4;"></div>
<div style="position:absolute;left:41.50px;top:650.76px;width:220px;text-align:center;font-size:18px;line-height:18px;color:#000000;font-weight:normal;white-space:nowrap;transform:scaleX(0.9);">BST Lab</div>
<div style="position:absolute;left:268px;top:639px;width:230px;height:32px;background:#b8cce4;"></div>
<div style="position:absolute;left:272.50px;top:650.76px;width:220px;text-align:center;font-size:18px;line-height:18px;color:#000000;font-weight:normal;white-space:nowrap;">Medicines</div>
<div style="position:absolute;left:499px;top:639px;width:258px;height:32px;background:#b8cce4;"></div>
<div style="position:absolute;left:517.50px;top:650.76px;width:220px;text-align:center;font-size:18px;line-height:18px;color:#000000;font-weight:normal;white-space:nowrap;">Kolkata</div>
<div style="position:absolute;left:758px;top:639px;width:230px;height:32px;background:#b8cce4;"></div>
<div style="position:absolute;left:762.50px;top:650.76px;width:220px;text-align:center;font-size:18px;line-height:18px;color:#000000;font-weight:normal;white-space:nowrap;">0</div>
<div style="position:absolute;left:989px;top:639px;width:230px;height:32px;background:#b8cce4;"></div>
<div style="position:absolute;left:993.50px;top:650.76px;width:220px;text-align:center;font-size:18px;line-height:18px;color:#000000;font-weight:normal;white-space:nowrap;transform:scaleX(1.07);">Mahesh Mathur</div>
<div style="position:absolute;left:1220px;top:639px;width:230px;height:32px;background:#b8cce4;"></div>
<div style="position:absolute;left:1224.50px;top:650.76px;width:220px;text-align:center;font-size:18px;line-height:18px;color:#000000;font-weight:normal;white-space:nowrap;">06-07-2012</div>
<div style="position:absolute;left:1451px;top:639px;width:230px;height:32px;background:#b8cce4;"></div>
<div style="position:absolute;left:1455.50px;top:650.76px;width:220px;text-align:center;font-size:18px;line-height:18px;color:#000000;font-weight:normal;white-space:nowrap;">88,297</div>
<div style="position:absolute;left:1682px;top:639px;width:212px;height:32px;background:#b8cce4;"></div>
<div style="position:absolute;left:1686.50px;top:650.76px;width:220px;text-align:center;font-size:18px;line-height:18px;color:#000000;font-weight:normal;white-space:nowrap;">2012</div>
<div style="position:absolute;left:0px;top:671px;width:36px;height:1px;background:#bababa;"></div>
<div style="position:absolute;left:0.00px;top:651.61px;width:36px;text-align:center;font-size:17px;line-height:17px;color:#111111;font-weight:normal;white-space:nowrap;">12</div>
<div style="position:absolute;left:37px;top:672px;width:230px;height:32px;background:#dce6f1;"></div>
<div style="position:absolute;left:41.50px;top:683.76px;width:220px;text-align:center;font-size:18px;line-height:18px;color:#000000;font-weight:normal;white-space:nowrap;transform:scaleX(0.9);">BST Lab</div>
<div style="position:absolute;left:268px;top:672px;width:230px;height:32px;background:#dce6f1;"></div>
<div style="position:absolute;left:272.50px;top:683.76px;width:220px;text-align:center;font-size:18px;line-height:18px;color:#000000;font-weight:normal;white-space:nowrap;">Medicines</div>
<div style="position:absolute;left:499px;top:672px;width:258px;height:32px;background:#dce6f1;"></div>
<div style="position:absolute;left:517.50px;top:683.76px;width:220px;text-align:center;font-size:18px;line-height:18px;color:#000000;font-weight:normal;white-space:nowrap;">Kolkata</div>
<div style="position:absolute;left:758px;top:672px;width:230px;height:32px;background:#dce6f1;"></div>
<div style="position:absolute;left:762.50px;top:683.76px;width:220px;text-align:center;font-size:18px;line-height:18px;color:#000000;font-weight:normal;white-space:nowrap;">0</div>
<div style="position:absolute;left:989px;top:672px;width:230px;height:32px;background:#dce6f1;"></div>
<div style="position:absolute;left:993.50px;top:683.76px;width:220px;text-align:center;font-size:18px;line-height:18px;color:#000000;font-weight:normal;white-space:nowrap;transform:scaleX(1.07);">Mahesh Mathur</div>
<div style="position:absolute;left:1220px;top:672px;width:230px;height:32px;background:#dce6f1;"></div>
<div style="position:absolute;left:1224.50px;top:683.76px;width:220px;text-align:center;font-size:18px;line-height:18px;color:#000000;font-weight:normal;white-space:nowrap;">08-09-2012</div>
<div style="position:absolute;left:1451px;top:672px;width:230px;height:32px;background:#dce6f1;"></div>
<div style="position:absolute;left:1455.50px;top:683.76px;width:220px;text-align:center;font-size:18px;line-height:18px;color:#000000;font-weight:normal;white-space:nowrap;">87,868</div>
<div style="position:absolute;left:1682px;top:672px;width:212px;height:32px;background:#dce6f1;"></div>
<div style="position:absolute;left:1686.50px;top:683.76px;width:220px;text-align:center;font-size:18px;line-height:18px;color:#000000;font-weight:normal;white-space:nowrap;">2012</div>
<div style="position:absolute;left:0px;top:704px;width:36px;height:1px;background:#bababa;"></div>
<div style="position:absolute;left:0.00px;top:684.61px;width:36px;text-align:center;font-size:17px;line-height:17px;color:#111111;font-weight:normal;white-space:nowrap;">13</div>
<div style="position:absolute;left:37px;top:705px;width:230px;height:32px;background:#b8cce4;"></div>
<div style="position:absolute;left:41.50px;top:716.76px;width:220px;text-align:center;font-size:18px;line-height:18px;color:#000000;font-weight:normal;white-space:nowrap;transform:scaleX(0.9);">BST Lab</div>
<div style="position:absolute;left:268px;top:705px;width:230px;height:32px;background:#b8cce4;"></div>
<div style="position:absolute;left:272.50px;top:716.76px;width:220px;text-align:center;font-size:18px;line-height:18px;color:#000000;font-weight:normal;white-space:nowrap;">Glucose</div>
<div style="position:absolute;left:499px;top:705px;width:258px;height:32px;background:#b8cce4;"></div>
<div style="position:absolute;left:517.50px;top:716.76px;width:220px;text-align:center;font-size:18px;line-height:18px;color:#000000;font-weight:normal;white-space:nowrap;">Delhi</div>
<div style="position:absolute;left:758px;top:705px;width:230px;height:32px;background:#b8cce4;"></div>
<div style="position:absolute;left:762.50px;top:716.76px;width:220px;text-align:center;font-size:18px;line-height:18px;color:#000000;font-weight:normal;white-space:nowrap;">1</div>
<div style="position:absolute;left:989px;top:705px;width:230px;height:32px;background:#b8cce4;"></div>
<div style="position:absolute;left:993.50px;top:716.76px;width:220px;text-align:center;font-size:18px;line-height:18px;color:#000000;font-weight:normal;white-space:nowrap;transform:scaleX(1.07);">Mahesh Mathur</div>
<div style="position:absolute;left:1220px;top:705px;width:230px;height:32px;background:#b8cce4;"></div>
<div style="position:absolute;left:1224.50px;top:716.76px;width:220px;text-align:center;font-size:18px;line-height:18px;color:#000000;font-weight:normal;white-space:nowrap;">08-09-2012</div>
<div style="position:absolute;left:1451px;top:705px;width:230px;height:32px;background:#b8cce4;"></div>
<div style="position:absolute;left:1455.50px;top:716.76px;width:220px;text-align:center;font-size:18px;line-height:18px;color:#000000;font-weight:normal;white-space:nowrap;">95,527</div>
<div style="position:absolute;left:1682px;top:705px;width:212px;height:32px;background:#b8cce4;"></div>
<div style="position:absolute;left:1686.50px;top:716.76px;width:220px;text-align:center;font-size:18px;line-height:18px;color:#000000;font-weight:normal;white-space:nowrap;">2012</div>
<div style="position:absolute;left:0px;top:737px;width:36px;height:1px;background:#bababa;"></div>
<div style="position:absolute;left:0.00px;top:717.61px;width:36px;text-align:center;font-size:17px;line-height:17px;color:#111111;font-weight:normal;white-space:nowrap;">14</div>
<div style="position:absolute;left:37px;top:738px;width:230px;height:32px;background:#dce6f1;"></div>
<div style="position:absolute;left:41.50px;top:749.76px;width:220px;text-align:center;font-size:18px;line-height:18px;color:#000000;font-weight:normal;white-space:nowrap;transform:scaleX(0.9);">BST Lab</div>
<div style="position:absolute;left:268px;top:738px;width:230px;height:32px;background:#dce6f1;"></div>
<div style="position:absolute;left:272.50px;top:749.76px;width:220px;text-align:center;font-size:18px;line-height:18px;color:#000000;font-weight:normal;white-space:nowrap;">Glucose</div>
<div style="position:absolute;left:499px;top:738px;width:258px;height:32px;background:#dce6f1;"></div>
<div style="position:absolute;left:517.50px;top:749.76px;width:220px;text-align:center;font-size:18px;line-height:18px;color:#000000;font-weight:normal;white-space:nowrap;">Delhi</div>
<div style="position:absolute;left:758px;top:738px;width:230px;height:32px;background:#dce6f1;"></div>
<div style="position:absolute;left:762.50px;top:749.76px;width:220px;text-align:center;font-size:18px;line-height:18px;color:#000000;font-weight:normal;white-space:nowrap;">0</div>
<div style="position:absolute;left:989px;top:738px;width:230px;height:32px;background:#dce6f1;"></div>
<div style="position:absolute;left:993.50px;top:749.76px;width:220px;text-align:center;font-size:18px;line-height:18px;color:#000000;font-weight:normal;white-space:nowrap;transform:scaleX(1.07);">Mahesh Mathur</div>
<div style="position:absolute;left:1220px;top:738px;width:230px;height:32px;background:#dce6f1;"></div>
<div style="position:absolute;left:1224.50px;top:749.76px;width:220px;text-align:center;font-size:18px;line-height:18px;color:#000000;font-weight:normal;white-space:nowrap;">30-06-2012</div>
<div style="position:absolute;left:1451px;top:738px;width:230px;height:32px;background:#dce6f1;"></div>
<div style="position:absolute;left:1455.50px;top:749.76px;width:220px;text-align:center;font-size:18px;line-height:18px;color:#000000;font-weight:normal;white-space:nowrap;">90,599</div>
<div style="position:absolute;left:1682px;top:738px;width:212px;height:32px;background:#dce6f1;"></div>
<div style="position:absolute;left:1686.50px;top:749.76px;width:220px;text-align:center;font-size:18px;line-height:18px;color:#000000;font-weight:normal;white-space:nowrap;">2012</div>
<div style="position:absolute;left:0px;top:770px;width:36px;height:1px;background:#bababa;"></div>
<div style="position:absolute;left:0.00px;top:750.61px;width:36px;text-align:center;font-size:17px;line-height:17px;color:#111111;font-weight:normal;white-space:nowrap;">15</div>
<div style="position:absolute;left:37px;top:771px;width:230px;height:32px;background:#b8cce4;"></div>
<div style="position:absolute;left:41.50px;top:782.76px;width:220px;text-align:center;font-size:18px;line-height:18px;color:#000000;font-weight:normal;white-space:nowrap;transform:scaleX(0.9);">BST Lab</div>
<div style="position:absolute;left:268px;top:771px;width:230px;height:32px;background:#b8cce4;"></div>
<div style="position:absolute;left:272.50px;top:782.76px;width:220px;text-align:center;font-size:18px;line-height:18px;color:#000000;font-weight:normal;white-space:nowrap;">Glucose</div>
<div style="position:absolute;left:499px;top:771px;width:258px;height:32px;background:#b8cce4;"></div>
<div style="position:absolute;left:517.50px;top:782.76px;width:220px;text-align:center;font-size:18px;line-height:18px;color:#000000;font-weight:normal;white-space:nowrap;">Delhi</div>
<div style="position:absolute;left:758px;top:771px;width:230px;height:32px;background:#b8cce4;"></div>
<div style="position:absolute;left:762.50px;top:782.76px;width:220px;text-align:center;font-size:18px;line-height:18px;color:#000000;font-weight:normal;white-space:nowrap;">0</div>
<div style="position:absolute;left:989px;top:771px;width:230px;height:32px;background:#b8cce4;"></div>
<div style="position:absolute;left:993.50px;top:782.76px;width:220px;text-align:center;font-size:18px;line-height:18px;color:#000000;font-weight:normal;white-space:nowrap;transform:scaleX(1.07);">Mahesh Mathur</div>
<div style="position:absolute;left:1220px;top:771px;width:230px;height:32px;background:#b8cce4;"></div>
<div style="position:absolute;left:1224.50px;top:782.76px;width:220px;text-align:center;font-size:18px;line-height:18px;color:#000000;font-weight:normal;white-space:nowrap;">23-12-2012</div>
<div style="position:absolute;left:1451px;top:771px;width:230px;height:32px;background:#b8cce4;"></div>
<div style="position:absolute;left:1455.50px;top:782.76px;width:220px;text-align:center;font-size:18px;line-height:18px;color:#000000;font-weight:normal;white-space:nowrap;">17,030</div>
<div style="position:absolute;left:1682px;top:771px;width:212px;height:32px;background:#b8cce4;"></div>
<div style="position:absolute;left:1686.50px;top:782.76px;width:220px;text-align:center;font-size:18px;line-height:18px;color:#000000;font-weight:normal;white-space:nowrap;">2012</div>
<div style="position:absolute;left:0px;top:803px;width:36px;height:1px;background:#bababa;"></div>
<div style="position:absolute;left:0.00px;top:783.61px;width:36px;text-align:center;font-size:17px;line-height:17px;color:#111111;font-weight:normal;white-space:nowrap;">16</div>
<div style="position:absolute;left:37px;top:804px;width:230px;height:32px;background:#dce6f1;"></div>
<div style="position:absolute;left:41.50px;top:815.76px;width:220px;text-align:center;font-size:18px;line-height:18px;color:#000000;font-weight:normal;white-space:nowrap;transform:scaleX(0.9);">BST Lab</div>
<div style="position:absolute;left:268px;top:804px;width:230px;height:32px;background:#dce6f1;"></div>
<div style="position:absolute;left:272.50px;top:815.76px;width:220px;text-align:center;font-size:18px;line-height:18px;color:#000000;font-weight:normal;white-space:nowrap;">Glucose</div>
<div style="position:absolute;left:499px;top:804px;width:258px;height:32px;background:#dce6f1;"></div>
<div style="position:absolute;left:517.50px;top:815.76px;width:220px;text-align:center;font-size:18px;line-height:18px;color:#000000;font-weight:normal;white-space:nowrap;">Delhi</div>
<div style="position:absolute;left:758px;top:804px;width:230px;height:32px;background:#dce6f1;"></div>
<div style="position:absolute;left:762.50px;top:815.76px;width:220px;text-align:center;font-size:18px;line-height:18px;color:#000000;font-weight:normal;white-space:nowrap;">0</div>
<div style="position:absolute;left:989px;top:804px;width:230px;height:32px;background:#dce6f1;"></div>
<div style="position:absolute;left:993.50px;top:815.76px;width:220px;text-align:center;font-size:18px;line-height:18px;color:#000000;font-weight:normal;white-space:nowrap;transform:scaleX(1.07);">Mahesh Mathur</div>
<div style="position:absolute;left:1220px;top:804px;width:230px;height:32px;background:#dce6f1;"></div>
<div style="position:absolute;left:1224.50px;top:815.76px;width:220px;text-align:center;font-size:18px;line-height:18px;color:#000000;font-weight:normal;white-space:nowrap;">08-12-2012</div>
<div style="position:absolute;left:1451px;top:804px;width:230px;height:32px;background:#dce6f1;"></div>
<div style="position:absolute;left:1455.50px;top:815.76px;width:220px;text-align:center;font-size:18px;line-height:18px;color:#000000;font-weight:normal;white-space:nowrap;">65,026</div>
<div style="position:absolute;left:1682px;top:804px;width:212px;height:32px;background:#dce6f1;"></div>
<div style="position:absolute;left:1686.50px;top:815.76px;width:220px;text-align:center;font-size:18px;line-height:18px;color:#000000;font-weight:normal;white-space:nowrap;">2012</div>
<div style="position:absolute;left:0px;top:836px;width:36px;height:1px;background:#bababa;"></div>
<div style="position:absolute;left:0.00px;top:816.61px;width:36px;text-align:center;font-size:17px;line-height:17px;color:#111111;font-weight:normal;white-space:nowrap;">17</div>
<div style="position:absolute;left:37px;top:837px;width:230px;height:32px;background:#b8cce4;"></div>
<div style="position:absolute;left:41.50px;top:848.76px;width:220px;text-align:center;font-size:18px;line-height:18px;color:#000000;font-weight:normal;white-space:nowrap;transform:scaleX(0.9);">BST Lab</div>
<div style="position:absolute;left:268px;top:837px;width:230px;height:32px;background:#b8cce4;"></div>
<div style="position:absolute;left:272.50px;top:848.76px;width:220px;text-align:center;font-size:18px;line-height:18px;color:#000000;font-weight:normal;white-space:nowrap;">Glucose</div>
<div style="position:absolute;left:499px;top:837px;width:258px;height:32px;background:#b8cce4;"></div>
<div style="position:absolute;left:517.50px;top:848.76px;width:220px;text-align:center;font-size:18px;line-height:18px;color:#000000;font-weight:normal;white-space:nowrap;">Delhi</div>
<div style="position:absolute;left:758px;top:837px;width:230px;height:32px;background:#b8cce4;"></div>
<div style="position:absolute;left:762.50px;top:848.76px;width:220px;text-align:center;font-size:18px;line-height:18px;color:#000000;font-weight:normal;white-space:nowrap;">0</div>
<div style="position:absolute;left:989px;top:837px;width:230px;height:32px;background:#b8cce4;"></div>
<div style="position:absolute;left:993.50px;top:848.76px;width:220px;text-align:center;font-size:18px;line-height:18px;color:#000000;font-weight:normal;white-space:nowrap;transform:scaleX(1.07);">Mahesh Mathur</div>
<div style="position:absolute;left:1220px;top:837px;width:230px;height:32px;background:#b8cce4;"></div>
<div style="position:absolute;left:1224.50px;top:848.76px;width:220px;text-align:center;font-size:18px;line-height:18px;color:#000000;font-weight:normal;white-space:nowrap;">28-10-2012</div>
<div style="position:absolute;left:1451px;top:837px;width:230px;height:32px;background:#b8cce4;"></div>
<div style="position:absolute;left:1455.50px;top:848.76px;width:220px;text-align:center;font-size:18px;line-height:18px;color:#000000;font-weight:normal;white-space:nowrap;">57,579</div>
<div style="position:absolute;left:1682px;top:837px;width:212px;height:32px;background:#b8cce4;"></div>
<div style="position:absolute;left:1686.50px;top:848.76px;width:220px;text-align:center;font-size:18px;line-height:18px;color:#000000;font-weight:normal;white-space:nowrap;">2012</div>
<div style="position:absolute;left:0px;top:869px;width:36px;height:1px;background:#bababa;"></div>
<div style="position:absolute;left:0.00px;top:849.61px;width:36px;text-align:center;font-size:17px;line-height:17px;color:#111111;font-weight:normal;white-space:nowrap;">18</div>
<div style="position:absolute;left:37px;top:870px;width:230px;height:32px;background:#dce6f1;"></div>
<div style="position:absolute;left:41.50px;top:881.76px;width:220px;text-align:center;font-size:18px;line-height:18px;color:#000000;font-weight:normal;white-space:nowrap;transform:scaleX(0.9);">BST Lab</div>
<div style="position:absolute;left:268px;top:870px;width:230px;height:32px;background:#dce6f1;"></div>
<div style="position:absolute;left:272.50px;top:881.76px;width:220px;text-align:center;font-size:18px;line-height:18px;color:#000000;font-weight:normal;white-space:nowrap;">Glucose</div>
<div style="position:absolute;left:499px;top:870px;width:258px;height:32px;background:#dce6f1;"></div>
<div style="position:absolute;left:517.50px;top:881.76px;width:220px;text-align:center;font-size:18px;line-height:18px;color:#000000;font-weight:normal;white-space:nowrap;">Delhi</div>
<div style="position:absolute;left:758px;top:870px;width:230px;height:32px;background:#dce6f1;"></div>
<div style="position:absolute;left:762.50px;top:881.76px;width:220px;text-align:center;font-size:18px;line-height:18px;color:#000000;font-weight:normal;white-space:nowrap;">0</div>
<div style="position:absolute;left:989px;top:870px;width:230px;height:32px;background:#dce6f1;"></div>
<div style="position:absolute;left:993.50px;top:881.76px;width:220px;text-align:center;font-size:18px;line-height:18px;color:#000000;font-weight:normal;white-space:nowrap;transform:scaleX(1.07);">Mahesh Mathur</div>
<div style="position:absolute;left:1220px;top:870px;width:230px;height:32px;background:#dce6f1;"></div>
<div style="position:absolute;left:1224.50px;top:881.76px;width:220px;text-align:center;font-size:18px;line-height:18px;color:#000000;font-weight:normal;white-space:nowrap;">28-10-2012</div>
<div style="position:absolute;left:1451px;top:870px;width:230px;height:32px;background:#dce6f1;"></div>
<div style="position:absolute;left:1455.50px;top:881.76px;width:220px;text-align:center;font-size:18px;line-height:18px;color:#000000;font-weight:normal;white-space:nowrap;">34,338</div>
<div style="position:absolute;left:1682px;top:870px;width:212px;height:32px;background:#dce6f1;"></div>
<div style="position:absolute;left:1686.50px;top:881.76px;width:220px;text-align:center;font-size:18px;line-height:18px;color:#000000;font-weight:normal;white-space:nowrap;">2012</div>
<div style="position:absolute;left:0px;top:902px;width:36px;height:1px;background:#bababa;"></div>
<div style="position:absolute;left:0.00px;top:882.61px;width:36px;text-align:center;font-size:17px;line-height:17px;color:#111111;font-weight:normal;white-space:nowrap;">19</div>
<div style="position:absolute;left:37px;top:903px;width:230px;height:32px;background:#b8cce4;"></div>
<div style="position:absolute;left:41.50px;top:914.76px;width:220px;text-align:center;font-size:18px;line-height:18px;color:#000000;font-weight:normal;white-space:nowrap;transform:scaleX(0.9);">BST Lab</div>
<div style="position:absolute;left:268px;top:903px;width:230px;height:32px;background:#b8cce4;"></div>
<div style="position:absolute;left:272.50px;top:914.76px;width:220px;text-align:center;font-size:18px;line-height:18px;color:#000000;font-weight:normal;white-space:nowrap;">Glucose</div>
<div style="position:absolute;left:499px;top:903px;width:258px;height:32px;background:#b8cce4;"></div>
<div style="position:absolute;left:517.50px;top:914.76px;width:220px;text-align:center;font-size:18px;line-height:18px;color:#000000;font-weight:normal;white-space:nowrap;">Delhi</div>
<div style="position:absolute;left:758px;top:903px;width:230px;height:32px;background:#b8cce4;"></div>
<div style="position:absolute;left:762.50px;top:914.76px;width:220px;text-align:center;font-size:18px;line-height:18px;color:#000000;font-weight:normal;white-space:nowrap;">0</div>
<div style="position:absolute;left:989px;top:903px;width:230px;height:32px;background:#b8cce4;"></div>
<div style="position:absolute;left:993.50px;top:914.76px;width:220px;text-align:center;font-size:18px;line-height:18px;color:#000000;font-weight:normal;white-space:nowrap;transform:scaleX(1.07);">Mahesh Mathur</div>
<div style="position:absolute;left:1220px;top:903px;width:230px;height:32px;background:#b8cce4;"></div>
<div style="position:absolute;left:1224.50px;top:914.76px;width:220px;text-align:center;font-size:18px;line-height:18px;color:#000000;font-weight:normal;white-space:nowrap;">15-09-2012</div>
<div style="position:absolute;left:1451px;top:903px;width:230px;height:32px;background:#b8cce4;"></div>
<div style="position:absolute;left:1455.50px;top:914.76px;width:220px;text-align:center;font-size:18px;line-height:18px;color:#000000;font-weight:normal;white-space:nowrap;">90,387</div>
<div style="position:absolute;left:1682px;top:903px;width:212px;height:32px;background:#b8cce4;"></div>
<div style="position:absolute;left:1686.50px;top:914.76px;width:220px;text-align:center;font-size:18px;line-height:18px;color:#000000;font-weight:normal;white-space:nowrap;">2012</div>
<div style="position:absolute;left:0px;top:935px;width:36px;height:1px;background:#bababa;"></div>
<div style="position:absolute;left:0.00px;top:915.61px;width:36px;text-align:center;font-size:17px;line-height:17px;color:#111111;font-weight:normal;white-space:nowrap;">20</div>
<div style="position:absolute;left:37px;top:936px;width:230px;height:32px;background:#dce6f1;"></div>
<div style="position:absolute;left:41.50px;top:947.76px;width:220px;text-align:center;font-size:18px;line-height:18px;color:#000000;font-weight:normal;white-space:nowrap;transform:scaleX(0.9);">BST Lab</div>
<div style="position:absolute;left:268px;top:936px;width:230px;height:32px;background:#dce6f1;"></div>
<div style="position:absolute;left:272.50px;top:947.76px;width:220px;text-align:center;font-size:18px;line-height:18px;color:#000000;font-weight:normal;white-space:nowrap;">Glucose</div>
<div style="position:absolute;left:499px;top:936px;width:258px;height:32px;background:#dce6f1;"></div>
<div style="position:absolute;left:517.50px;top:947.76px;width:220px;text-align:center;font-size:18px;line-height:18px;color:#000000;font-weight:normal;white-space:nowrap;">Delhi</div>
<div style="position:absolute;left:758px;top:936px;width:230px;height:32px;background:#dce6f1;"></div>
<div style="position:absolute;left:762.50px;top:947.76px;width:220px;text-align:center;font-size:18px;line-height:18px;color:#000000;font-weight:normal;white-space:nowrap;">0</div>
<div style="position:absolute;left:989px;top:936px;width:230px;height:32px;background:#dce6f1;"></div>
<div style="position:absolute;left:993.50px;top:947.76px;width:220px;text-align:center;font-size:18px;line-height:18px;color:#000000;font-weight:normal;white-space:nowrap;transform:scaleX(1.07);">Mahesh Mathur</div>
<div style="position:absolute;left:1220px;top:936px;width:230px;height:32px;background:#dce6f1;"></div>
<div style="position:absolute;left:1224.50px;top:947.76px;width:220px;text-align:center;font-size:18px;line-height:18px;color:#000000;font-weight:normal;white-space:nowrap;">28-10-2012</div>
<div style="position:absolute;left:1451px;top:936px;width:230px;height:32px;background:#dce6f1;"></div>
<div style="position:absolute;left:1455.50px;top:947.76px;width:220px;text-align:center;font-size:18px;line-height:18px;color:#000000;font-weight:normal;white-space:nowrap;">62,324</div>
<div style="position:absolute;left:1682px;top:936px;width:212px;height:32px;background:#dce6f1;"></div>
<div style="position:absolute;left:1686.50px;top:947.76px;width:220px;text-align:center;font-size:18px;line-height:18px;color:#000000;font-weight:normal;white-space:nowrap;">2012</div>
<div style="position:absolute;left:0px;top:968px;width:36px;height:1px;background:#bababa;"></div>
<div style="position:absolute;left:0.00px;top:948.61px;width:36px;text-align:center;font-size:17px;line-height:17px;color:#111111;font-weight:normal;white-space:nowrap;">21</div>
</div>
<div style="position:absolute;left:0px;top:308px;width:36px;height:1px;background:#bababa;"></div>
<div style="position:absolute;left:0.00px;top:287.61px;width:36px;text-align:center;font-size:17px;line-height:17px;color:#217346;font-weight:normal;white-space:nowrap;">1</div>
<div style="position:absolute;left:41.50px;top:283.76px;width:220px;text-align:center;font-size:18px;line-height:18px;color:#000000;font-weight:bold;white-space:nowrap;transform:scaleX(0.91);">CUSTOMER</div>
<div style="position:absolute;left:272.50px;top:283.76px;width:220px;text-align:center;font-size:18px;line-height:18px;color:#000000;font-weight:bold;white-space:nowrap;transform:scaleX(0.91);">PRODUCTS</div>
<div style="position:absolute;left:517.50px;top:283.76px;width:220px;text-align:center;font-size:18px;line-height:18px;color:#000000;font-weight:bold;white-space:nowrap;transform:scaleX(0.91);">SALES REGION</div>
<div style="position:absolute;left:762.50px;top:283.76px;width:220px;text-align:center;font-size:18px;line-height:18px;color:#000000;font-weight:bold;white-space:nowrap;transform:scaleX(0.91);">UNIQUE PURCHASES</div>
<div style="position:absolute;left:993.50px;top:283.76px;width:220px;text-align:center;font-size:18px;line-height:18px;color:#000000;font-weight:bold;white-space:nowrap;transform:scaleX(0.91);">SALES PERSON</div>
<div style="position:absolute;left:1224.50px;top:283.76px;width:220px;text-align:center;font-size:18px;line-height:18px;color:#000000;font-weight:bold;white-space:nowrap;transform:scaleX(0.91);">ORDER DATE</div>
<div style="position:absolute;left:1455.50px;top:283.76px;width:220px;text-align:center;font-size:18px;line-height:18px;color:#000000;font-weight:bold;white-space:nowrap;transform:scaleX(0.91);">SALES</div>
<div style="position:absolute;left:1686.50px;top:283.76px;width:220px;text-align:center;font-size:18px;line-height:18px;color:#000000;font-weight:bold;white-space:nowrap;transform:scaleX(0.91);">FINANCIAL YEAR</div>
<div style="position:absolute;left:0;top:0;width:1894px;height:961px;overflow:hidden;">
<div style="position:absolute;left:246px;top:286px;width:20px;height:20px;background:linear-gradient(#ffffff,#eceef3);border:1px solid #a9a9a9;"></div>
<svg style="position:absolute;left:253px;top:295px;" width="7" height="5" viewBox="0 0 7 5"><path d="M0 0h7L3.5 4.5z" fill="#595959"/></svg>
<div style="position:absolute;left:477px;top:286px;width:20px;height:20px;background:linear-gradient(#ffffff,#eceef3);border:1px solid #a9a9a9;"></div>
<svg style="position:absolute;left:484px;top:295px;" width="7" height="5" viewBox="0 0 7 5"><path d="M0 0h7L3.5 4.5z" fill="#595959"/></svg>
<div style="position:absolute;left:736px;top:286px;width:20px;height:20px;background:linear-gradient(#ffffff,#eceef3);border:1px solid #a9a9a9;"></div>
<svg style="position:absolute;left:743px;top:295px;" width="7" height="5" viewBox="0 0 7 5"><path d="M0 0h7L3.5 4.5z" fill="#595959"/></svg>
<div style="position:absolute;left:967px;top:286px;width:20px;height:20px;background:linear-gradient(#ffffff,#eceef3);border:1px solid #a9a9a9;"></div>
<svg style="position:absolute;left:974px;top:295px;" width="7" height="5" viewBox="0 0 7 5"><path d="M0 0h7L3.5 4.5z" fill="#595959"/></svg>
<div style="position:absolute;left:1198px;top:286px;width:20px;height:20px;background:linear-gradient(#ffffff,#eceef3);border:1px solid #a9a9a9;"></div>
<svg style="position:absolute;left:1205px;top:295px;" width="7" height="5" viewBox="0 0 7 5"><path d="M0 0h7L3.5 4.5z" fill="#595959"/></svg>
<div style="position:absolute;left:1429px;top:286px;width:20px;height:20px;background:linear-gradient(#ffffff,#eceef3);border:1px solid #a9a9a9;"></div>
<svg style="position:absolute;left:1436px;top:295px;" width="7" height="5" viewBox="0 0 7 5"><path d="M0 0h7L3.5 4.5z" fill="#595959"/></svg>
<div style="position:absolute;left:1660px;top:286px;width:20px;height:20px;background:linear-gradient(#ffffff,#eceef3);border:1px solid #a9a9a9;"></div>
<svg style="position:absolute;left:1667px;top:295px;" width="7" height="5" viewBox="0 0 7 5"><path d="M0 0h7L3.5 4.5z" fill="#595959"/></svg>
<div style="position:absolute;left:1891px;top:286px;width:20px;height:20px;background:linear-gradient(#ffffff,#eceef3);border:1px solid #a9a9a9;"></div>
<svg style="position:absolute;left:1898px;top:295px;" width="7" height="5" viewBox="0 0 7 5"><path d="M0 0h7L3.5 4.5z" fill="#595959"/></svg>
</div>
<div style="position:absolute;left:35px;top:274px;width:234px;height:36px;border:2px solid #217346;"></div>
<div style="position:absolute;left:37px;top:276px;width:230px;height:32px;border-left:1px solid #fff;border-top:1px solid #fff;border-bottom:1px solid #fff;"></div>
<div style="position:absolute;left:264px;top:304px;width:7px;height:7px;background:#217346;border:1px solid #fff;"></div>
<div style="position:absolute;left:1895px;top:250px;width:25px;height:711px;background:#e6e6e6;"></div>
<div style="position:absolute;left:1898px;top:252px;width:19px;height:19px;background:#fff;border:1px solid #a0a0a0;"></div>
<svg style="position:absolute;left:1902.5px;top:258px;" width="10" height="6" viewBox="0 0 10 6"><path d="M0 6h10L5 0z" fill="#262626"/></svg>
<div style="position:absolute;left:1898px;top:271px;width:19px;height:23px;background:#fff;border:1px solid #a0a0a0;"></div>
<div style="position:absolute;left:1898px;top:294px;width:19px;height:650px;background:#f3f3f3;"></div>
<div style="position:absolute;left:1894px;top:275px;width:1px;height:686px;background:#9a9a9a;"></div>
<div style="position:absolute;left:1898px;top:944px;width:19px;height:18px;background:#fff;border:1px solid #a0a0a0;"></div>
<svg style="position:absolute;left:1902.5px;top:950px;" width="10" height="6" viewBox="0 0 10 6"><path d="M0 0h10L5 6z" fill="#262626"/></svg>
<div style="position:absolute;left:0px;top:961px;width:1920px;height:33px;background:#e6e6e6;border-bottom:1px solid #c6c6c6;border-top:1px solid #ababab;"></div>
<svg style="position:absolute;left:30px;top:973px;" width="6" height="10" viewBox="0 0 6 10"><path d="M6 0v10L0 5z" fill="#bdbdbd"/></svg>
<svg style="position:absolute;left:62px;top:973px;" width="6" height="10" viewBox="0 0 6 10"><path d="M0 0v10l6-5z" fill="#bdbdbd"/></svg>
<div style="position:absolute;left:112px;top:965px;width:1px;height:24px;background:#9c9c9c;"></div>
<div style="position:absolute;left:226px;top:965px;width:1px;height:24px;background:#9c9c9c;"></div>
<div style="position:absolute;left:128px;top:967.96px;font-size:16px;line-height:16px;color:#444444;font-weight:normal;white-space:nowrap;letter-spacing:0.5px;">Pivot Table</div>
<div style="position:absolute;left:243px;top:967.96px;font-size:16px;line-height:16px;color:#444444;font-weight:normal;white-space:nowrap;letter-spacing:0.4px;">Pivot Table (2)</div>
<div style="position:absolute;left:367px;top:961px;width:121px;height:28px;background:#ffffff;border-left:1px solid #ababab;border-right:1px solid #ababab;"></div>
<div style="position:absolute;left:367px;top:988px;width:121px;height:2px;background:#217346;"></div>
<div style="position:absolute;left:379.5px;top:966.46px;font-size:16px;line-height:16px;color:#217346;font-weight:bold;white-space:nowrap;letter-spacing:0.3px;">Source Data</div>
<svg style="position:absolute;left:525px;top:967px;" width="22" height="22" viewBox="0 0 22 22"><circle cx="11" cy="11" r="9.5" fill="none" stroke="#6d6d6d" stroke-width="1.3"/><path d="M11 6v10M6 11h10" stroke="#6d6d6d" stroke-width="1.3"/></svg>
<div style="position:absolute;left:1150px;top:971px;width:3px;height:3px;background:#b4b4b4;"></div>
<div style="position:absolute;left:1150px;top:976px;width:3px;height:3px;background:#b4b4b4;"></div>
<div style="position:absolute;left:1150px;top:981px;width:3px;height:3px;background:#b4b4b4;"></div>
<div style="position:absolute;left:1170px;top:968px;width:725px;height:19px;background:#e6e6e6;"></div>
<div style="position:absolute;left:1170px;top:968px;width:20px;height:19px;background:#fff;border:1px solid #ababab;"></div>
<svg style="position:absolute;left:1176px;top:973px;" width="6" height="10" viewBox="0 0 6 10"><path d="M6 0v10L0 5z" fill="#262626"/></svg>
<div style="position:absolute;left:1189px;top:968px;width:459px;height:19px;background:#fff;border:1px solid #ababab;"></div>
<div style="position:absolute;left:1876px;top:968px;width:19px;height:19px;background:#fff;border:1px solid #ababab;"></div>
<svg style="position:absolute;left:1883px;top:973px;" width="6" height="10" viewBox="0 0 6 10"><path d="M0 0v10l6-5z" fill="#262626"/></svg>
<div style="position:absolute;left:0px;top:994px;width:1920px;height:26px;background:#f3f3f3;"></div>
<div style="position:absolute;left:14.0px;top:1000.50px;font-size:13px;line-height:13px;color:#262626;font-weight:normal;white-space:nowrap;transform:scaleX(0.947);transform-origin:0 0;">Ready</div>
<div style="position:absolute;left:1547px;top:994px;width:50px;height:26px;background:#c6c6c6;"></div>
<svg style="position:absolute;left:1564px;top:999px;" width="17" height="16" viewBox="0 0 17 16"><path d="M0.5 0.5h16v15h-16zM0.5 5.5h16M0.5 10.5h16M5.5 0.5v15M11.5 0.5v15" fill="none" stroke="#6d6d6d" stroke-width="1"/></svg>
<svg style="position:absolute;left:1613px;top:999px;" width="17" height="16" viewBox="0 0 17 16"><path d="M0.5 0.5h16v15h-16z" fill="none" stroke="#6d6d6d"/><path d="M4.5 2.5h8v11h-8z M6 5.5h5M6 7.5h5M6 9.5h5M6 11.5h4" fill="none" stroke="#6d6d6d" stroke-width="1"/></svg>
<svg style="position:absolute;left:1662px;top:999px;" width="17" height="16" viewBox="0 0 17 16"><path d="M0.5 0.5h16v15h-16zM5.5 0.5v8M10.5 0.5v8M0.5 8.5h10" fill="none" stroke="#6d6d6d" stroke-width="1"/></svg>
<div style="position:absolute;left:1703px;top:1007px;width:10px;height:1px;background:#444;"></div>
<div style="position:absolute;left:1720px;top:1007px;width:125px;height:1px;background:#6d6d6d;"></div>
<div style="position:absolute;left:1780px;top:999px;width:6px;height:16px;background:#444;"></div>
<div style="position:absolute;left:1850px;top:1007px;width:11px;height:1px;background:#444;"></div>
<div style="position:absolute;left:1855px;top:1002px;width:1px;height:11px;background:#444;"></div>
<div style="position:absolute;left:1877.5px;top:1001.00px;font-size:13px;line-height:13px;color:#444444;font-weight:normal;white-space:nowrap;transform:scaleX(0.903);transform-origin:0 0;">100%</div>
</body></html>
